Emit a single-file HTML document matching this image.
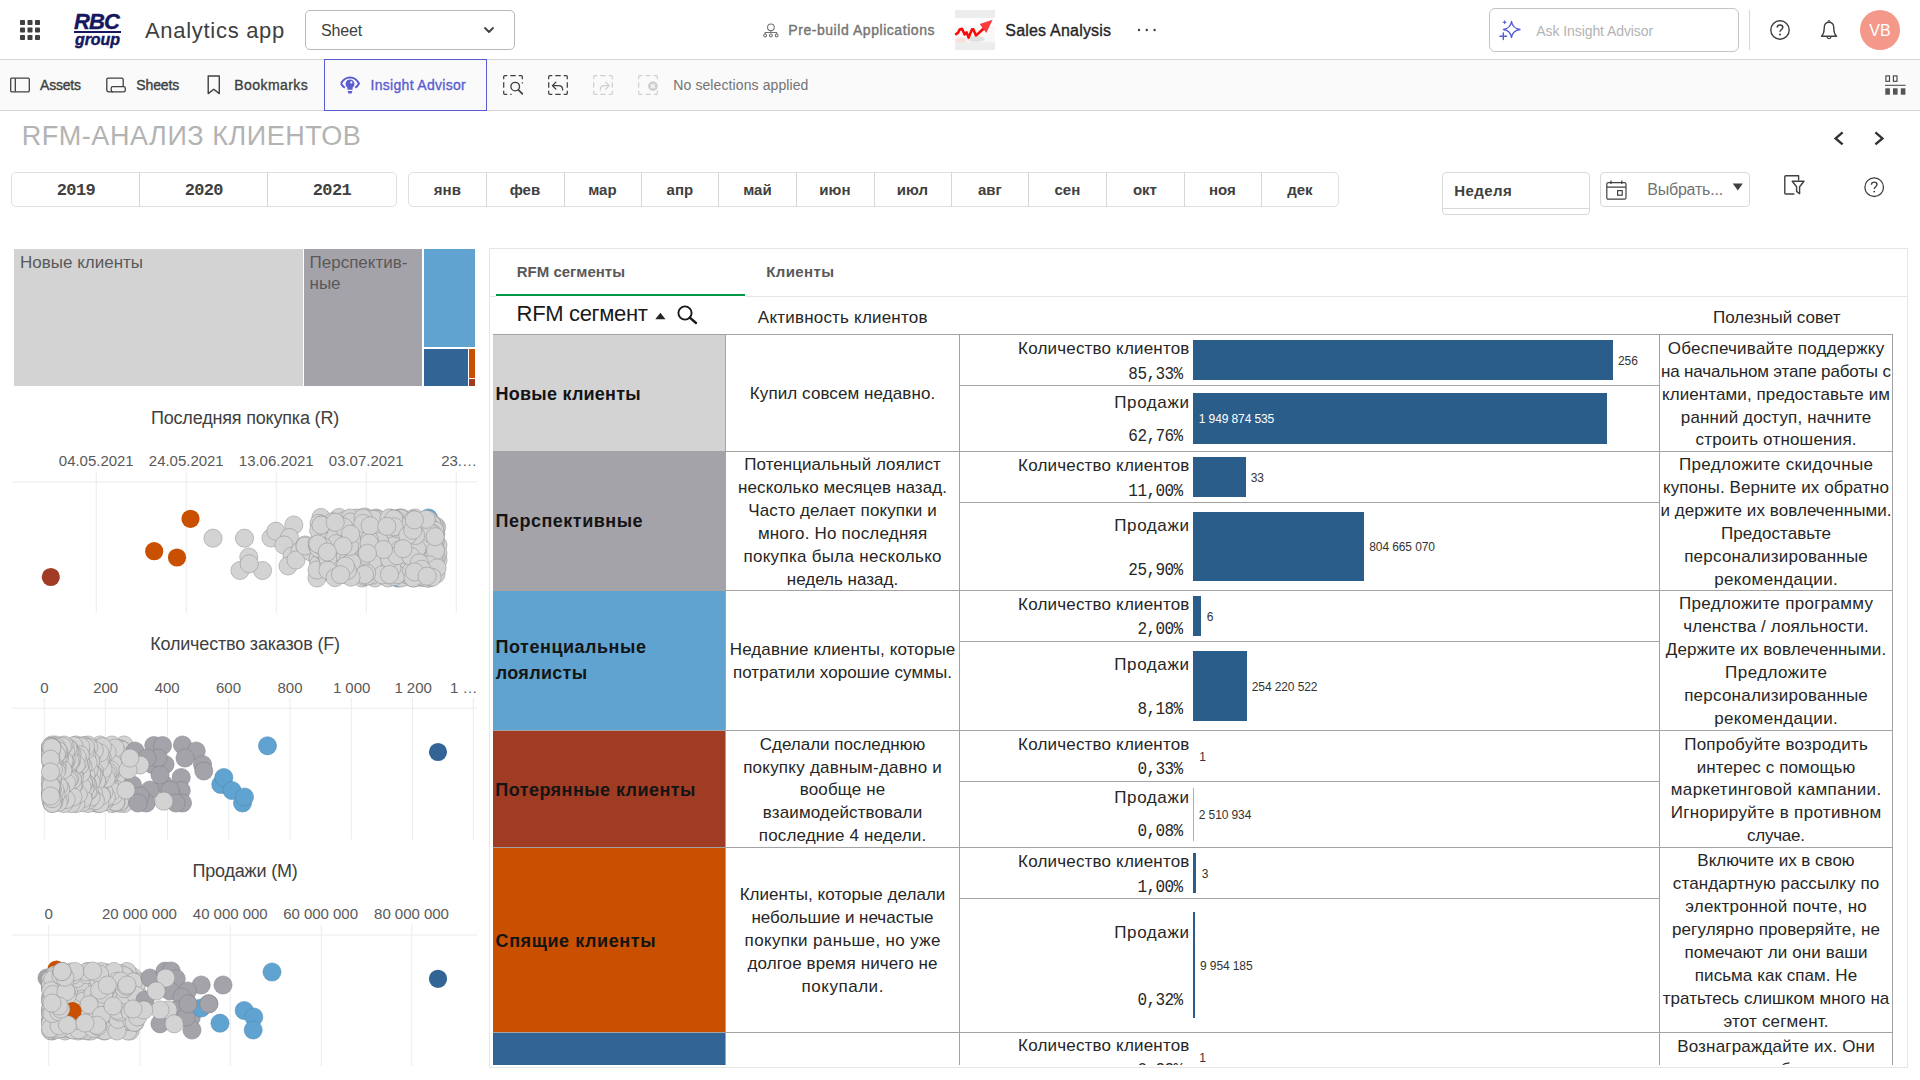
<!DOCTYPE html>
<html lang="ru"><head><meta charset="utf-8"><title>RFM-анализ клиентов - Sales Analysis</title>
<style>
html,body{margin:0;padding:0;background:#fff;}
body{width:1920px;height:1080px;position:relative;overflow:hidden;font-family:"Liberation Sans",sans-serif;}
.b{position:absolute;box-sizing:border-box;}
.t{position:absolute;white-space:nowrap;}
svg{display:block;overflow:visible;}
</style></head><body>

<header>
<div class="b" style="left:0px;top:0px;width:1920px;height:60px;background:#fff;border-bottom:1px solid #d6d6d6;"></div>
<svg class="b" style="left:20px;top:20px;" width="20" height="20" viewBox="0 0 20 20"><g fill="#404040"><rect x="0" y="0" width="5" height="5" rx="0.8"/><rect x="7.5" y="0" width="5" height="5" rx="0.8"/><rect x="15" y="0" width="5" height="5" rx="0.8"/><rect x="0" y="7.5" width="5" height="5" rx="0.8"/><rect x="7.5" y="7.5" width="5" height="5" rx="0.8"/><rect x="15" y="7.5" width="5" height="5" rx="0.8"/><rect x="0" y="15" width="5" height="5" rx="0.8"/><rect x="7.5" y="15" width="5" height="5" rx="0.8"/><rect x="15" y="15" width="5" height="5" rx="0.8"/></g></svg>
<span class="t" style="top:11px;font:700 22px/22px 'Liberation Sans',sans-serif;color:#17175f;letter-spacing:-0.9px;left:74.00px;font-style:italic;-webkit-text-stroke:0.4px #17175f;">RBC</span>
<div class="b" style="left:74px;top:31px;width:47px;height:1.7px;background:#17175f;"></div>
<span class="t" style="top:32px;font:700 16px/16px 'Liberation Sans',sans-serif;color:#17175f;letter-spacing:-0.1px;left:75.00px;font-style:italic;-webkit-text-stroke:0.45px #17175f;">group</span>
<span class="t" style="top:20px;font:400 22px/22px 'Liberation Sans',sans-serif;color:#404040;letter-spacing:0.7px;left:145.00px;">Analytics app</span>
<div class="b" style="left:305px;top:10px;width:210px;height:40px;border:1px solid #b8b8b8;border-radius:5px;background:#fff;"></div>
<span class="t" style="top:23px;font:400 16px/16px 'Liberation Sans',sans-serif;color:#404040;letter-spacing:-0.15px;left:321.00px;">Sheet</span>
<svg class="b" style="left:484px;top:27px;" width="10" height="7" viewBox="0 0 10 7"><path d="M1 1 L5 5 L9 1" fill="none" stroke="#404040" stroke-width="1.8" stroke-linecap="round" stroke-linejoin="round"/></svg>
<svg class="b" style="left:762.6px;top:23.3px;" width="15.8" height="14.9" viewBox="0 0 17 16"><g fill="none" stroke="#737373" stroke-width="1.15"><circle cx="8.5" cy="4.6" r="3.6"/><path d="M8.5 8.2V11 M2.3 11.8V10.2H14.7V11.8"/><circle cx="2.3" cy="13.4" r="1.5"/><circle cx="8.5" cy="13.4" r="1.5"/><circle cx="14.7" cy="13.4" r="1.5"/></g></svg>
<span class="t" style="top:23px;font:400 14px/14px 'Liberation Sans',sans-serif;color:#737373;letter-spacing:0.55px;left:788.30px;-webkit-text-stroke:0.35px currentColor;">Pre-build Applications</span>
<div class="b" style="left:955px;top:10px;width:40px;height:40px;background:#ededed;"></div>
<svg class="b" style="left:955px;top:10px;" width="40" height="40" viewBox="0 0 40 40"><rect x="0" y="8" width="40" height="8.2" fill="#fff"/><rect x="0" y="16.2" width="40" height="15.8" fill="#f8f8f8"/><ellipse cx="21" cy="29" rx="9" ry="3" fill="#d9d9d9" opacity="0.75"/><ellipse cx="6" cy="30" rx="6" ry="2.5" fill="#fbd9d2" opacity="0.8"/><path d="M0.2 24.8L3.2 22.6L4.6 19.4L7 18.8L9.6 24.4L11.6 22.4L13.6 27.6L17 19.4L18.4 19.4L21 25.4L26 21L32 15.5" fill="none" stroke="#fb0a0a" stroke-width="2.6" stroke-linejoin="round"/><path d="M24.7 14L37.6 9.8L31.3 23Z" fill="#f93d3d"/></svg>
<span class="t" style="top:23px;font:400 16px/16px 'Liberation Sans',sans-serif;color:#262626;letter-spacing:0.2px;left:1005.30px;-webkit-text-stroke:0.35px currentColor;">Sales Analysis</span>
<svg class="b" style="left:1137px;top:28px;" width="20" height="4" viewBox="0 0 20 4"><g fill="#404040"><circle cx="2" cy="2" r="1.2"/><circle cx="9.8" cy="2" r="1.2"/><circle cx="17.6" cy="2" r="1.2"/></g></svg>
<div class="b" style="left:1489px;top:8px;width:250px;height:44px;border:1px solid #c4c4c4;border-radius:6px;background:#fff;"></div>
<svg class="b" style="left:1500px;top:20px;" width="21" height="20" viewBox="0 0 21 20"><g fill="none" stroke="#5a5dd1" stroke-width="1.4" stroke-linejoin="round"><path d="M11.5 1.5 C12.3 6.5 14.5 8.7 20 9.5 C14.5 10.3 12.3 12.5 11.5 17.5 C10.7 12.5 8.5 10.3 3.5 9.5 C8.5 8.7 10.7 6.5 11.5 1.5Z"/><path d="M3.3 13V19.5M0 16.2H6.6" stroke-linecap="round"/></g><path d="M4.6 0 L5.3 1.6 L6.9 2.3 L5.3 3 L4.6 4.6 L3.9 3 L2.3 2.3 L3.9 1.6Z" fill="#5a5dd1"/></svg>
<span class="t" style="top:24px;font:400 14px/14px 'Liberation Sans',sans-serif;color:#b3b3b3;letter-spacing:-0.08px;left:1536.30px;">Ask Insight Advisor</span>
<div class="b" style="left:1749px;top:10px;width:1px;height:40px;background:#d6d6d6;"></div>
<svg class="b" style="left:1770px;top:20px;" width="20" height="20" viewBox="0 0 20 20"><circle cx="10" cy="10" r="9.2" fill="none" stroke="#404040" stroke-width="1.4"/><path d="M7.2 7.6 C7.2 5.8 8.5 4.9 10 4.9 C11.6 4.9 12.8 5.9 12.8 7.4 C12.8 9.4 10 9.6 10 11.8" fill="none" stroke="#404040" stroke-width="1.5"/><circle cx="10" cy="14.4" r="1" fill="#404040"/></svg>
<svg class="b" style="left:1820px;top:20px;" width="18" height="20" viewBox="0 0 18 20"><path d="M9 2.2 C5.6 2.2 4.2 5 4.2 8 C4.2 12 3.3 14.4 1.5 16.3 H16.5 C14.7 14.4 13.8 12 13.8 8 C13.8 5 12.4 2.2 9 2.2Z" fill="none" stroke="#404040" stroke-width="1.4" stroke-linejoin="round"/><circle cx="9" cy="1.6" r="1.1" fill="none" stroke="#404040" stroke-width="1"/><path d="M7 16.8 C7.2 19.2 10.8 19.2 11 16.8" fill="none" stroke="#404040" stroke-width="1.3"/></svg>
<div class="b" style="left:1860px;top:10px;width:40px;height:40px;background:#f4998a;border-radius:50%;"></div>
<span class="t" style="top:23px;font:400 16px/16px 'Liberation Sans',sans-serif;color:#fff;letter-spacing:0.2px;left:1880.00px;transform:translateX(-50%);">VB</span>
</header>
<nav>
<div class="b" style="left:0px;top:60px;width:1920px;height:51px;background:#fafafa;border-bottom:1px solid #d6d6d6;"></div>
<svg class="b" style="left:10px;top:77px;" width="20" height="16" viewBox="0 0 20 16"><rect x="0.7" y="1.2" width="18.6" height="13.6" rx="1" fill="none" stroke="#404040" stroke-width="1.3"/><path d="M5.3 1.2V14.8" stroke="#404040" stroke-width="1.3"/></svg>
<span class="t" style="top:78px;font:400 14px/14px 'Liberation Sans',sans-serif;color:#404040;letter-spacing:-0.2px;left:40.00px;-webkit-text-stroke:0.35px currentColor;">Assets</span>
<svg class="b" style="left:106px;top:77px;" width="20" height="16" viewBox="0 0 20 16"><path d="M17.2 9.4V2.6Q17.2 1.2 15.8 1.2H2.2Q0.8 1.2 0.8 2.6V12.8Q0.8 14.8 2.8 14.8H7" fill="none" stroke="#404040" stroke-width="1.3"/><rect x="5.2" y="9.6" width="14.1" height="5.2" rx="1.6" fill="none" stroke="#404040" stroke-width="1.3"/></svg>
<span class="t" style="top:78px;font:400 14px/14px 'Liberation Sans',sans-serif;color:#404040;letter-spacing:-0.12px;left:136.30px;-webkit-text-stroke:0.35px currentColor;">Sheets</span>
<svg class="b" style="left:207px;top:75px;" width="14" height="20" viewBox="0 0 14 20"><path d="M1.2 1 H12.3 V18.6 L6.75 14.2 L1.2 18.6Z" fill="none" stroke="#404040" stroke-width="1.4" stroke-linejoin="round"/></svg>
<span class="t" style="top:78px;font:400 14px/14px 'Liberation Sans',sans-serif;color:#404040;letter-spacing:0.45px;left:234.20px;-webkit-text-stroke:0.35px currentColor;">Bookmarks</span>
<div class="b" style="left:324px;top:59px;width:163px;height:52px;border:1px solid #595dd0;background:#fafafa;"></div>
<svg class="b" style="left:340px;top:76px;" width="20" height="18" viewBox="0 0 20 18"><path d="M1 7.4C3.4 3 6.5 1.4 10 1.4C13.5 1.4 16.6 3 19 7.4C17.9 9.4 16.6 10.8 15.2 11.8" fill="none" stroke="#5a5dd1" stroke-width="2"/><path d="M1 7.4C2.1 9.4 3.4 10.8 4.8 11.8" fill="none" stroke="#5a5dd1" stroke-width="2"/><path d="M10 3.4A4.5 4.5 0 0 0 7.4 11.5L7.4 13.7H12.6L12.6 11.5A4.5 4.5 0 0 0 10 3.4Z" fill="#5a5dd1"/><circle cx="11.3" cy="6.4" r="1.15" fill="#fafafa"/><path d="M7.6 15H12.4L11.6 17.5H8.4Z" fill="#5a5dd1"/></svg>
<span class="t" style="top:78px;font:400 14px/14px 'Liberation Sans',sans-serif;color:#5a5dd1;letter-spacing:0.3px;left:370.50px;-webkit-text-stroke:0.35px currentColor;">Insight Advisor</span>
<svg class="b" style="left:503px;top:75px;" width="20" height="20" viewBox="0 0 20 20"><path d="M0.7 4.3V1.7Q0.7 0.7 1.7 0.7H4.3M7.3 0.7H12.7M15.7 0.7H18.3Q19.3 0.7 19.3 1.7V4.3M4.3 19.3H1.7Q0.7 19.3 0.7 18.3V15.7M0.7 12.7V7.3" fill="none" stroke="#404040" stroke-width="1.25"/><path d="M19.3 7.3V8.6M8.6 19.3H7.3" fill="none" stroke="#404040" stroke-width="1.25"/><circle cx="12.2" cy="11.6" r="4.3" fill="none" stroke="#404040" stroke-width="1.35"/><path d="M15.4 14.9L19.4 18.9" stroke="#404040" stroke-width="1.7" stroke-linecap="round"/></svg>
<svg class="b" style="left:548px;top:75px;" width="20" height="20" viewBox="0 0 20 20"><path d="M0.7 4.3V1.7Q0.7 0.7 1.7 0.7H4.3M7.3 0.7H12.7M15.7 0.7H18.3Q19.3 0.7 19.3 1.7V4.3M19.3 7.3V12.7M19.3 15.7V18.3Q19.3 19.3 18.3 19.3H15.7M12.7 19.3H7.3M4.3 19.3H1.7Q0.7 19.3 0.7 18.3V15.7M0.7 12.7V7.3" fill="none" stroke="#404040" stroke-width="1.25"/><path d="M4.6 10.6H10.4C13 10.6 14.6 12.2 14.6 14.2V15.6" fill="none" stroke="#404040" stroke-width="1.3"/><path d="M7.8 7.2L4.4 10.6L7.8 14" fill="none" stroke="#404040" stroke-width="1.3" stroke-linejoin="round" stroke-linecap="round"/></svg>
<svg class="b" style="left:593px;top:75px;" width="20" height="20" viewBox="0 0 20 20"><path d="M0.7 4.3V1.7Q0.7 0.7 1.7 0.7H4.3M7.3 0.7H12.7M15.7 0.7H18.3Q19.3 0.7 19.3 1.7V4.3M19.3 7.3V12.7M19.3 15.7V18.3Q19.3 19.3 18.3 19.3H15.7M12.7 19.3H7.3M4.3 19.3H1.7Q0.7 19.3 0.7 18.3V15.7M0.7 12.7V7.3" fill="none" stroke="#d0d0d0" stroke-width="1.25"/><path d="M15.4 10.6H11.6C9 10.6 7.4 12.2 7.4 14.2V15.6" fill="none" stroke="#d0d0d0" stroke-width="1.3"/><path d="M12.8 7.2L16.2 10.6L12.8 14" fill="none" stroke="#d0d0d0" stroke-width="1.3" stroke-linejoin="round" stroke-linecap="round"/></svg>
<svg class="b" style="left:638px;top:75px;" width="20" height="20" viewBox="0 0 20 20"><path d="M0.7 4.3V1.7Q0.7 0.7 1.7 0.7H4.3M7.3 0.7H12.7M15.7 0.7H18.3Q19.3 0.7 19.3 1.7V4.3M19.3 15.7V18.3Q19.3 19.3 18.3 19.3H15.7M12.7 19.3H7.3M4.3 19.3H1.7Q0.7 19.3 0.7 18.3V15.7M0.7 12.7V7.3" fill="none" stroke="#d0d0d0" stroke-width="1.25"/><circle cx="14.9" cy="11.1" r="6" fill="#fafafa"/><circle cx="14.9" cy="11.1" r="4.9" fill="#d0d0d0"/><path d="M13 9.2L16.8 13M16.8 9.2L13 13" stroke="#fafafa" stroke-width="1.3"/></svg>
<span class="t" style="top:78px;font:400 14px/14px 'Liberation Sans',sans-serif;color:#737373;letter-spacing:0.1px;left:673.30px;">No selections applied</span>
<svg class="b" style="left:1885px;top:75px;" width="21" height="20" viewBox="0 0 21 20"><g fill="none" stroke="#404040" stroke-width="1.1"><rect x="0.9" y="0.9" width="3.6" height="5.4"/><rect x="8.4" y="0.9" width="3.6" height="5.4"/></g><path d="M0 10.3 H20.6" stroke="#404040" stroke-width="1"/><g fill="#555"><rect x="0.3" y="13.3" width="4.6" height="6.4"/><rect x="8" y="13.3" width="4.6" height="6.4"/><rect x="15.8" y="13.3" width="4.6" height="6.4"/></g></svg>
</nav>
<section>
<span class="t" style="top:123px;font:400 27px/27px 'Liberation Sans',sans-serif;color:#b3b3b3;letter-spacing:0.55px;left:21.70px;">RFM-АНАЛИЗ КЛИЕНТОВ</span>
<svg class="b" style="left:1833px;top:131px;" width="12" height="15" viewBox="0 0 12 15"><path d="M9.6 1.4 L2.6 7.4 L9.6 13.4" fill="none" stroke="#333" stroke-width="2.4" stroke-linejoin="miter"/></svg>
<svg class="b" style="left:1873px;top:131px;" width="12" height="15" viewBox="0 0 12 15"><path d="M2.4 1.4 L9.4 7.4 L2.4 13.4" fill="none" stroke="#333" stroke-width="2.4" stroke-linejoin="miter"/></svg>
<div class="b" style="left:11px;top:172px;width:386px;height:35px;border:1px solid #e0e0e0;border-radius:5px;background:#fff;"></div>
<div class="b" style="left:139px;top:172px;width:1px;height:35px;background:#d6d6d6;"></div>
<div class="b" style="left:267px;top:172px;width:1px;height:35px;background:#d6d6d6;"></div>
<span class="t" style="top:182px;font:700 17px/17px 'Liberation Mono',monospace;color:#404040;letter-spacing:-0.65px;left:75.90px;transform:translateX(-50%);">2019</span>
<span class="t" style="top:182px;font:700 17px/17px 'Liberation Mono',monospace;color:#404040;letter-spacing:-0.65px;left:203.80px;transform:translateX(-50%);">2020</span>
<span class="t" style="top:182px;font:700 17px/17px 'Liberation Mono',monospace;color:#404040;letter-spacing:-0.65px;left:331.90px;transform:translateX(-50%);">2021</span>
<div class="b" style="left:408px;top:172px;width:931px;height:35px;border:1px solid #e0e0e0;border-radius:5px;background:#fff;"></div>
<span class="t" style="top:182px;font:700 15px/15px 'Liberation Sans',sans-serif;color:#404040;left:447.40px;transform:translateX(-50%);">янв</span>
<div class="b" style="left:486px;top:172px;width:1px;height:35px;background:#d6d6d6;"></div>
<span class="t" style="top:182px;font:700 15px/15px 'Liberation Sans',sans-serif;color:#404040;left:524.90px;transform:translateX(-50%);">фев</span>
<div class="b" style="left:564px;top:172px;width:1px;height:35px;background:#d6d6d6;"></div>
<span class="t" style="top:182px;font:700 15px/15px 'Liberation Sans',sans-serif;color:#404040;left:602.40px;transform:translateX(-50%);">мар</span>
<div class="b" style="left:641px;top:172px;width:1px;height:35px;background:#d6d6d6;"></div>
<span class="t" style="top:182px;font:700 15px/15px 'Liberation Sans',sans-serif;color:#404040;left:679.90px;transform:translateX(-50%);">апр</span>
<div class="b" style="left:718px;top:172px;width:1px;height:35px;background:#d6d6d6;"></div>
<span class="t" style="top:182px;font:700 15px/15px 'Liberation Sans',sans-serif;color:#404040;left:757.40px;transform:translateX(-50%);">май</span>
<div class="b" style="left:796px;top:172px;width:1px;height:35px;background:#d6d6d6;"></div>
<span class="t" style="top:182px;font:700 15px/15px 'Liberation Sans',sans-serif;color:#404040;left:834.90px;transform:translateX(-50%);">июн</span>
<div class="b" style="left:874px;top:172px;width:1px;height:35px;background:#d6d6d6;"></div>
<span class="t" style="top:182px;font:700 15px/15px 'Liberation Sans',sans-serif;color:#404040;left:912.40px;transform:translateX(-50%);">июл</span>
<div class="b" style="left:951px;top:172px;width:1px;height:35px;background:#d6d6d6;"></div>
<span class="t" style="top:182px;font:700 15px/15px 'Liberation Sans',sans-serif;color:#404040;left:989.90px;transform:translateX(-50%);">авг</span>
<div class="b" style="left:1028px;top:172px;width:1px;height:35px;background:#d6d6d6;"></div>
<span class="t" style="top:182px;font:700 15px/15px 'Liberation Sans',sans-serif;color:#404040;left:1067.40px;transform:translateX(-50%);">сен</span>
<div class="b" style="left:1106px;top:172px;width:1px;height:35px;background:#d6d6d6;"></div>
<span class="t" style="top:182px;font:700 15px/15px 'Liberation Sans',sans-serif;color:#404040;left:1144.90px;transform:translateX(-50%);">окт</span>
<div class="b" style="left:1184px;top:172px;width:1px;height:35px;background:#d6d6d6;"></div>
<span class="t" style="top:182px;font:700 15px/15px 'Liberation Sans',sans-serif;color:#404040;left:1222.40px;transform:translateX(-50%);">ноя</span>
<div class="b" style="left:1261px;top:172px;width:1px;height:35px;background:#d6d6d6;"></div>
<span class="t" style="top:182px;font:700 15px/15px 'Liberation Sans',sans-serif;color:#404040;left:1299.90px;transform:translateX(-50%);">дек</span>
<div class="b" style="left:1442px;top:172px;width:148px;height:43px;border:1px solid #d9d9d9;border-radius:4px;background:#fff;"></div>
<div class="b" style="left:1442px;top:208px;width:148px;height:1px;background:#d9d9d9;"></div>
<span class="t" style="top:183px;font:700 15px/15px 'Liberation Sans',sans-serif;color:#404040;letter-spacing:0.45px;left:1454.20px;">Неделя</span>
<div class="b" style="left:1600px;top:172px;width:150px;height:35px;border:1px solid #d9d9d9;border-radius:4px;background:#fff;"></div>
<svg class="b" style="left:1606px;top:180px;" width="21" height="20" viewBox="0 0 21 20"><g fill="none" stroke="#404040" stroke-width="1.2"><rect x="0.8" y="2.6" width="19.2" height="16.6" rx="1.5"/><path d="M0.8 7.2H20 M5 0.4V4 M15.8 0.4V4"/><rect x="11.6" y="10.6" width="4.6" height="4.6"/></g></svg>
<span class="t" style="top:182px;font:400 16px/16px 'Liberation Sans',sans-serif;color:#737373;letter-spacing:-0.2px;left:1647.20px;">Выбрать...</span>
<svg class="b" style="left:1732px;top:183px;" width="12" height="8" viewBox="0 0 12 8"><path d="M0.8 0.6 H10.8 L5.8 7.6Z" fill="#404040"/></svg>
<svg class="b" style="left:1784px;top:175px;" width="21" height="21" viewBox="0 0 21 21"><g fill="none" stroke="#404040" stroke-width="1.4" stroke-linejoin="round"><path d="M10.4 19 H1.8 Q0.8 19 0.8 18 V1.8 Q0.8 0.8 1.8 0.8 H14.6 V5.6"/><path d="M8.2 6.2 H20 L15.6 11.8 V18.8 L12.6 16.4 V11.8Z" fill="#fff"/></g></svg>
<svg class="b" style="left:1864px;top:177px;" width="21" height="21" viewBox="0 0 21 21"><circle cx="10.2" cy="10.2" r="9.3" fill="none" stroke="#404040" stroke-width="1.3"/><path d="M7.4 7.8 C7.4 6 8.7 5.1 10.2 5.1 C11.8 5.1 13 6.1 13 7.6 C13 9.6 10.2 9.8 10.2 12" fill="none" stroke="#404040" stroke-width="1.4"/><circle cx="10.2" cy="14.6" r="0.95" fill="#404040"/></svg>
</section>
<aside>
<div class="b" style="left:14.25px;top:249.25px;width:288.75px;height:136.25px;background:#d3d3d3;"></div>
<div class="b" style="left:304.25px;top:249.25px;width:117.75px;height:136.25px;background:#a5a3aa;"></div>
<div class="b" style="left:423.5px;top:249.25px;width:51px;height:97.75px;background:#60a3d0;"></div>
<div class="b" style="left:423.5px;top:348.5px;width:44.5px;height:37px;background:#326496;"></div>
<div class="b" style="left:469.25px;top:348.5px;width:5.25px;height:29px;background:#c85000;"></div>
<div class="b" style="left:469.25px;top:379.25px;width:5.25px;height:6.25px;background:#a03c23;"></div>
<span class="t" style="top:254px;font:400 17px/17px 'Liberation Sans',sans-serif;color:#595959;left:20.00px;">Новые клиенты</span>
<span class="t" style="top:254px;font:400 17px/17px 'Liberation Sans',sans-serif;color:#595959;left:309.50px;">Перспектив-</span>
<span class="t" style="top:275px;font:400 17px/17px 'Liberation Sans',sans-serif;color:#595959;left:309.50px;">ные</span>
<span class="t" style="top:409px;font:400 18px/18px 'Liberation Sans',sans-serif;color:#404040;letter-spacing:-0.18px;left:245.00px;transform:translateX(-50%);">Последняя покупка (R)</span>
<span class="t" style="top:453px;font:400 15px/15px 'Liberation Sans',sans-serif;color:#595959;letter-spacing:-0.03px;left:96.25px;transform:translateX(-50%);">04.05.2021</span>
<span class="t" style="top:453px;font:400 15px/15px 'Liberation Sans',sans-serif;color:#595959;letter-spacing:-0.03px;left:186.25px;transform:translateX(-50%);">24.05.2021</span>
<span class="t" style="top:453px;font:400 15px/15px 'Liberation Sans',sans-serif;color:#595959;letter-spacing:-0.03px;left:276.25px;transform:translateX(-50%);">13.06.2021</span>
<span class="t" style="top:453px;font:400 15px/15px 'Liberation Sans',sans-serif;color:#595959;letter-spacing:-0.03px;left:366.25px;transform:translateX(-50%);">03.07.2021</span>
<span class="t" style="top:453px;font:400 15px/15px 'Liberation Sans',sans-serif;color:#595959;letter-spacing:-0.03px;left:441.25px;">23.…</span>
<svg class="b" style="left:0;top:0" width="490" height="1080" viewBox="0 0 490 1080"><path d="M96.25 472V613" stroke="#ebebeb" stroke-width="1"/><path d="M186.25 472V613" stroke="#ebebeb" stroke-width="1"/><path d="M276.25 472V613" stroke="#ebebeb" stroke-width="1"/><path d="M366.25 472V613" stroke="#ebebeb" stroke-width="1"/><path d="M456.25 472V613" stroke="#ebebeb" stroke-width="1"/><path d="M12 482H477" stroke="#ebebeb" stroke-width="1.2"/><g fill="#a03c23" stroke="none" stroke-width="0.5"><circle cx="50.8" cy="577.0" r="9.1"/></g><g fill="#c85000" stroke="none" stroke-width="0.5"><circle cx="190.5" cy="518.8" r="9.1"/><circle cx="154.2" cy="551.2" r="9.1"/><circle cx="177.0" cy="557.5" r="9.1"/></g><g fill="#60a3d0" stroke="#4a86b0" stroke-width="0.5"><circle cx="428.5" cy="518.0" r="9.1"/><circle cx="398.0" cy="578.0" r="9.1"/></g><g fill="#a5a3aa" stroke="#8c8c8c" stroke-width="0.5"><circle cx="428.0" cy="578.0" r="9.1"/></g><g fill="#d3d3d3" stroke="#8c8c8c" stroke-width="0.5"><circle cx="213.0" cy="538.2" r="9.1"/><circle cx="244.5" cy="538.2" r="9.1"/><circle cx="248.8" cy="557.0" r="9.1"/><circle cx="240.0" cy="570.5" r="9.1"/><circle cx="262.5" cy="570.5" r="9.1"/><circle cx="249.2" cy="563.8" r="9.1"/><circle cx="271.0" cy="538.0" r="9.1"/><circle cx="275.8" cy="531.2" r="9.1"/><circle cx="293.8" cy="525.0" r="9.1"/><circle cx="289.5" cy="537.5" r="9.1"/><circle cx="284.0" cy="545.0" r="9.1"/><circle cx="292.0" cy="556.0" r="9.1"/><circle cx="300.0" cy="551.0" r="9.1"/><circle cx="288.0" cy="566.0" r="9.1"/><circle cx="296.0" cy="560.0" r="9.1"/><circle cx="305.0" cy="545.0" r="9.1"/><circle cx="311.0" cy="552.0" r="9.1"/><circle cx="431.2" cy="525.6" r="9.1"/><circle cx="413.8" cy="576.5" r="9.1"/><circle cx="380.0" cy="538.3" r="9.1"/><circle cx="376.0" cy="518.0" r="9.1"/><circle cx="433.7" cy="568.9" r="9.1"/><circle cx="394.0" cy="532.3" r="9.1"/><circle cx="334.9" cy="540.3" r="9.1"/><circle cx="414.7" cy="542.8" r="9.1"/><circle cx="429.2" cy="566.4" r="9.1"/><circle cx="392.5" cy="529.4" r="9.1"/><circle cx="434.0" cy="570.0" r="9.1"/><circle cx="354.7" cy="533.9" r="9.1"/><circle cx="425.2" cy="531.0" r="9.1"/><circle cx="369.5" cy="575.7" r="9.1"/><circle cx="424.3" cy="566.4" r="9.1"/><circle cx="354.4" cy="539.8" r="9.1"/><circle cx="358.9" cy="573.2" r="9.1"/><circle cx="438.0" cy="545.0" r="9.1"/><circle cx="409.0" cy="576.9" r="9.1"/><circle cx="347.1" cy="575.1" r="9.1"/><circle cx="353.0" cy="524.1" r="9.1"/><circle cx="320.5" cy="531.4" r="9.1"/><circle cx="351.9" cy="533.9" r="9.1"/><circle cx="387.2" cy="538.3" r="9.1"/><circle cx="428.8" cy="535.4" r="9.1"/><circle cx="373.3" cy="532.0" r="9.1"/><circle cx="421.2" cy="533.5" r="9.1"/><circle cx="375.7" cy="531.4" r="9.1"/><circle cx="350.6" cy="541.6" r="9.1"/><circle cx="368.5" cy="538.8" r="9.1"/><circle cx="376.9" cy="533.9" r="9.1"/><circle cx="378.9" cy="525.4" r="9.1"/><circle cx="420.5" cy="577.1" r="9.1"/><circle cx="355.4" cy="522.2" r="9.1"/><circle cx="382.6" cy="538.9" r="9.1"/><circle cx="396.5" cy="544.4" r="9.1"/><circle cx="348.2" cy="521.8" r="9.1"/><circle cx="404.2" cy="559.9" r="9.1"/><circle cx="392.6" cy="559.6" r="9.1"/><circle cx="320.6" cy="532.9" r="9.1"/><circle cx="436.6" cy="527.0" r="9.1"/><circle cx="410.0" cy="570.6" r="9.1"/><circle cx="358.2" cy="549.4" r="9.1"/><circle cx="397.2" cy="563.6" r="9.1"/><circle cx="375.3" cy="549.1" r="9.1"/><circle cx="335.9" cy="521.2" r="9.1"/><circle cx="403.2" cy="558.8" r="9.1"/><circle cx="341.5" cy="565.9" r="9.1"/><circle cx="330.3" cy="557.8" r="9.1"/><circle cx="383.0" cy="560.0" r="9.1"/><circle cx="394.0" cy="574.0" r="9.1"/><circle cx="435.4" cy="541.8" r="9.1"/><circle cx="388.4" cy="525.1" r="9.1"/><circle cx="360.7" cy="518.2" r="9.1"/><circle cx="339.0" cy="517.5" r="9.1"/><circle cx="356.9" cy="533.1" r="9.1"/><circle cx="351.2" cy="569.8" r="9.1"/><circle cx="424.0" cy="577.6" r="9.1"/><circle cx="388.9" cy="538.6" r="9.1"/><circle cx="370.0" cy="560.0" r="9.1"/><circle cx="401.0" cy="578.0" r="9.1"/><circle cx="379.7" cy="573.2" r="9.1"/><circle cx="379.8" cy="537.9" r="9.1"/><circle cx="349.7" cy="530.1" r="9.1"/><circle cx="366.5" cy="571.9" r="9.1"/><circle cx="353.3" cy="521.5" r="9.1"/><circle cx="357.4" cy="539.6" r="9.1"/><circle cx="345.1" cy="540.9" r="9.1"/><circle cx="416.3" cy="520.4" r="9.1"/><circle cx="347.6" cy="534.8" r="9.1"/><circle cx="345.3" cy="547.5" r="9.1"/><circle cx="345.5" cy="533.9" r="9.1"/><circle cx="376.8" cy="523.5" r="9.1"/><circle cx="305.0" cy="546.0" r="9.1"/><circle cx="324.8" cy="542.9" r="9.1"/><circle cx="433.9" cy="525.4" r="9.1"/><circle cx="391.0" cy="568.1" r="9.1"/><circle cx="391.8" cy="555.8" r="9.1"/><circle cx="431.2" cy="560.8" r="9.1"/><circle cx="358.0" cy="549.4" r="9.1"/><circle cx="422.1" cy="527.7" r="9.1"/><circle cx="399.6" cy="518.0" r="9.1"/><circle cx="367.2" cy="533.5" r="9.1"/><circle cx="351.8" cy="558.2" r="9.1"/><circle cx="427.2" cy="546.5" r="9.1"/><circle cx="408.5" cy="529.9" r="9.1"/><circle cx="342.2" cy="564.8" r="9.1"/><circle cx="318.7" cy="560.1" r="9.1"/><circle cx="374.0" cy="536.3" r="9.1"/><circle cx="377.3" cy="519.1" r="9.1"/><circle cx="369.4" cy="561.0" r="9.1"/><circle cx="386.9" cy="536.1" r="9.1"/><circle cx="358.6" cy="541.6" r="9.1"/><circle cx="319.3" cy="545.0" r="9.1"/><circle cx="360.0" cy="543.9" r="9.1"/><circle cx="318.1" cy="558.1" r="9.1"/><circle cx="377.9" cy="545.5" r="9.1"/><circle cx="421.1" cy="562.4" r="9.1"/><circle cx="339.2" cy="559.9" r="9.1"/><circle cx="412.3" cy="556.6" r="9.1"/><circle cx="391.3" cy="558.5" r="9.1"/><circle cx="384.1" cy="573.1" r="9.1"/><circle cx="337.4" cy="535.3" r="9.1"/><circle cx="322.1" cy="552.9" r="9.1"/><circle cx="365.6" cy="563.6" r="9.1"/><circle cx="434.2" cy="556.7" r="9.1"/><circle cx="381.6" cy="548.4" r="9.1"/><circle cx="334.6" cy="574.9" r="9.1"/><circle cx="366.4" cy="519.9" r="9.1"/><circle cx="368.1" cy="534.6" r="9.1"/><circle cx="374.4" cy="568.4" r="9.1"/><circle cx="421.3" cy="548.5" r="9.1"/><circle cx="327.0" cy="571.1" r="9.1"/><circle cx="376.6" cy="521.2" r="9.1"/><circle cx="432.6" cy="561.3" r="9.1"/><circle cx="328.9" cy="567.6" r="9.1"/><circle cx="415.0" cy="518.0" r="9.1"/><circle cx="345.0" cy="527.1" r="9.1"/><circle cx="434.0" cy="544.8" r="9.1"/><circle cx="406.4" cy="526.6" r="9.1"/><circle cx="409.0" cy="543.5" r="9.1"/><circle cx="379.7" cy="575.4" r="9.1"/><circle cx="435.0" cy="525.6" r="9.1"/><circle cx="385.9" cy="529.0" r="9.1"/><circle cx="407.1" cy="573.5" r="9.1"/><circle cx="365.0" cy="517.0" r="9.1"/><circle cx="360.6" cy="527.7" r="9.1"/><circle cx="375.0" cy="578.0" r="9.1"/><circle cx="357.2" cy="518.9" r="9.1"/><circle cx="419.1" cy="562.3" r="9.1"/><circle cx="408.5" cy="559.6" r="9.1"/><circle cx="358.6" cy="567.6" r="9.1"/><circle cx="398.1" cy="560.0" r="9.1"/><circle cx="350.1" cy="525.8" r="9.1"/><circle cx="345.2" cy="563.0" r="9.1"/><circle cx="397.8" cy="518.7" r="9.1"/><circle cx="404.0" cy="566.1" r="9.1"/><circle cx="369.9" cy="525.8" r="9.1"/><circle cx="431.6" cy="537.8" r="9.1"/><circle cx="406.3" cy="522.0" r="9.1"/><circle cx="382.0" cy="547.2" r="9.1"/><circle cx="381.5" cy="541.9" r="9.1"/><circle cx="398.0" cy="571.2" r="9.1"/><circle cx="433.6" cy="526.0" r="9.1"/><circle cx="326.1" cy="527.1" r="9.1"/><circle cx="371.6" cy="574.1" r="9.1"/><circle cx="332.4" cy="571.0" r="9.1"/><circle cx="377.6" cy="550.9" r="9.1"/><circle cx="402.0" cy="518.0" r="9.1"/><circle cx="435.3" cy="557.0" r="9.1"/><circle cx="348.9" cy="519.3" r="9.1"/><circle cx="346.7" cy="537.9" r="9.1"/><circle cx="438.0" cy="560.0" r="9.1"/><circle cx="384.3" cy="572.7" r="9.1"/><circle cx="417.9" cy="571.8" r="9.1"/><circle cx="378.5" cy="543.7" r="9.1"/><circle cx="412.4" cy="528.2" r="9.1"/><circle cx="348.7" cy="564.9" r="9.1"/><circle cx="387.1" cy="550.0" r="9.1"/><circle cx="385.3" cy="570.3" r="9.1"/><circle cx="365.4" cy="575.2" r="9.1"/><circle cx="428.3" cy="546.4" r="9.1"/><circle cx="341.5" cy="536.8" r="9.1"/><circle cx="362.3" cy="574.2" r="9.1"/><circle cx="333.2" cy="541.8" r="9.1"/><circle cx="366.8" cy="532.8" r="9.1"/><circle cx="365.8" cy="543.0" r="9.1"/><circle cx="406.9" cy="574.9" r="9.1"/><circle cx="364.4" cy="527.7" r="9.1"/><circle cx="391.2" cy="531.2" r="9.1"/><circle cx="336.5" cy="553.7" r="9.1"/><circle cx="396.8" cy="541.7" r="9.1"/><circle cx="371.2" cy="532.5" r="9.1"/><circle cx="391.8" cy="550.1" r="9.1"/><circle cx="396.7" cy="565.1" r="9.1"/><circle cx="414.8" cy="546.7" r="9.1"/><circle cx="344.3" cy="520.8" r="9.1"/><circle cx="343.7" cy="559.4" r="9.1"/><circle cx="387.5" cy="551.1" r="9.1"/><circle cx="427.5" cy="560.2" r="9.1"/><circle cx="357.2" cy="572.6" r="9.1"/><circle cx="368.8" cy="527.8" r="9.1"/><circle cx="386.8" cy="534.1" r="9.1"/><circle cx="354.8" cy="568.1" r="9.1"/><circle cx="413.2" cy="551.1" r="9.1"/><circle cx="331.4" cy="555.1" r="9.1"/><circle cx="362.0" cy="578.0" r="9.1"/><circle cx="364.6" cy="552.9" r="9.1"/><circle cx="352.8" cy="569.4" r="9.1"/><circle cx="363.2" cy="537.1" r="9.1"/><circle cx="428.1" cy="530.0" r="9.1"/><circle cx="414.8" cy="557.5" r="9.1"/><circle cx="429.3" cy="577.8" r="9.1"/><circle cx="427.0" cy="578.0" r="9.1"/><circle cx="356.0" cy="518.0" r="9.1"/><circle cx="428.0" cy="555.6" r="9.1"/><circle cx="425.3" cy="559.8" r="9.1"/><circle cx="399.3" cy="572.3" r="9.1"/><circle cx="341.0" cy="535.4" r="9.1"/><circle cx="358.1" cy="538.6" r="9.1"/><circle cx="321.0" cy="517.5" r="9.1"/><circle cx="404.8" cy="522.6" r="9.1"/><circle cx="421.2" cy="543.9" r="9.1"/><circle cx="381.4" cy="573.6" r="9.1"/><circle cx="423.2" cy="546.8" r="9.1"/><circle cx="321.3" cy="547.3" r="9.1"/><circle cx="371.0" cy="539.1" r="9.1"/><circle cx="391.1" cy="529.2" r="9.1"/><circle cx="435.8" cy="533.6" r="9.1"/><circle cx="372.4" cy="575.1" r="9.1"/><circle cx="432.5" cy="551.0" r="9.1"/><circle cx="378.1" cy="519.7" r="9.1"/><circle cx="340.0" cy="535.1" r="9.1"/><circle cx="364.8" cy="576.4" r="9.1"/><circle cx="361.0" cy="546.4" r="9.1"/><circle cx="413.1" cy="545.1" r="9.1"/><circle cx="437.9" cy="553.4" r="9.1"/><circle cx="436.0" cy="574.2" r="9.1"/><circle cx="356.3" cy="544.5" r="9.1"/><circle cx="403.7" cy="572.8" r="9.1"/><circle cx="393.8" cy="553.0" r="9.1"/><circle cx="359.7" cy="544.7" r="9.1"/><circle cx="358.7" cy="533.2" r="9.1"/><circle cx="428.5" cy="571.0" r="9.1"/><circle cx="414.0" cy="578.0" r="9.1"/><circle cx="325.6" cy="567.0" r="9.1"/><circle cx="405.2" cy="563.9" r="9.1"/><circle cx="355.1" cy="527.3" r="9.1"/><circle cx="318.7" cy="564.1" r="9.1"/><circle cx="424.0" cy="531.0" r="9.1"/><circle cx="421.8" cy="530.7" r="9.1"/><circle cx="414.1" cy="536.3" r="9.1"/><circle cx="413.2" cy="566.7" r="9.1"/><circle cx="351.7" cy="532.4" r="9.1"/><circle cx="390.9" cy="541.0" r="9.1"/><circle cx="331.7" cy="570.5" r="9.1"/><circle cx="373.8" cy="539.4" r="9.1"/><circle cx="338.4" cy="552.4" r="9.1"/><circle cx="356.8" cy="527.1" r="9.1"/><circle cx="383.2" cy="566.7" r="9.1"/><circle cx="399.3" cy="571.6" r="9.1"/><circle cx="371.6" cy="520.9" r="9.1"/><circle cx="388.0" cy="578.0" r="9.1"/><circle cx="413.5" cy="533.1" r="9.1"/><circle cx="370.2" cy="532.9" r="9.1"/><circle cx="361.6" cy="565.3" r="9.1"/><circle cx="391.5" cy="528.7" r="9.1"/><circle cx="352.9" cy="557.6" r="9.1"/><circle cx="321.9" cy="531.9" r="9.1"/><circle cx="418.3" cy="576.3" r="9.1"/><circle cx="317.0" cy="578.0" r="9.1"/><circle cx="372.3" cy="545.6" r="9.1"/><circle cx="376.9" cy="567.9" r="9.1"/><circle cx="381.2" cy="537.6" r="9.1"/><circle cx="317.0" cy="570.0" r="9.1"/><circle cx="421.3" cy="576.1" r="9.1"/><circle cx="389.1" cy="548.2" r="9.1"/><circle cx="355.2" cy="527.7" r="9.1"/><circle cx="406.8" cy="540.7" r="9.1"/><circle cx="328.7" cy="563.4" r="9.1"/><circle cx="392.0" cy="530.3" r="9.1"/><circle cx="393.0" cy="538.3" r="9.1"/><circle cx="423.1" cy="526.2" r="9.1"/><circle cx="370.6" cy="520.9" r="9.1"/><circle cx="402.0" cy="548.3" r="9.1"/><circle cx="426.0" cy="558.2" r="9.1"/><circle cx="394.5" cy="564.7" r="9.1"/><circle cx="339.9" cy="569.8" r="9.1"/><circle cx="394.1" cy="576.7" r="9.1"/><circle cx="435.4" cy="532.9" r="9.1"/><circle cx="358.2" cy="521.1" r="9.1"/><circle cx="378.2" cy="567.3" r="9.1"/><circle cx="333.2" cy="545.4" r="9.1"/><circle cx="416.3" cy="555.0" r="9.1"/><circle cx="407.5" cy="559.5" r="9.1"/><circle cx="332.3" cy="521.8" r="9.1"/><circle cx="368.2" cy="533.9" r="9.1"/><circle cx="317.6" cy="545.7" r="9.1"/><circle cx="412.2" cy="519.2" r="9.1"/><circle cx="433.8" cy="539.9" r="9.1"/><circle cx="364.3" cy="572.4" r="9.1"/><circle cx="367.7" cy="575.9" r="9.1"/><circle cx="393.6" cy="558.9" r="9.1"/><circle cx="319.0" cy="523.4" r="9.1"/><circle cx="427.2" cy="566.7" r="9.1"/><circle cx="415.0" cy="556.7" r="9.1"/><circle cx="400.9" cy="518.6" r="9.1"/><circle cx="375.9" cy="566.0" r="9.1"/><circle cx="323.8" cy="552.5" r="9.1"/><circle cx="388.3" cy="547.0" r="9.1"/><circle cx="351.7" cy="574.3" r="9.1"/><circle cx="368.3" cy="518.9" r="9.1"/><circle cx="325.8" cy="553.1" r="9.1"/><circle cx="436.2" cy="557.4" r="9.1"/><circle cx="396.4" cy="573.6" r="9.1"/><circle cx="350.0" cy="518.0" r="9.1"/><circle cx="318.6" cy="548.4" r="9.1"/><circle cx="381.1" cy="531.4" r="9.1"/><circle cx="350.8" cy="534.7" r="9.1"/><circle cx="369.1" cy="559.6" r="9.1"/><circle cx="428.4" cy="519.8" r="9.1"/><circle cx="384.1" cy="533.4" r="9.1"/><circle cx="327.8" cy="558.1" r="9.1"/><circle cx="405.7" cy="566.0" r="9.1"/><circle cx="406.0" cy="536.1" r="9.1"/><circle cx="403.0" cy="572.0" r="9.1"/><circle cx="344.4" cy="525.1" r="9.1"/><circle cx="354.6" cy="556.1" r="9.1"/><circle cx="421.3" cy="531.8" r="9.1"/><circle cx="434.3" cy="560.3" r="9.1"/><circle cx="329.7" cy="536.0" r="9.1"/><circle cx="431.9" cy="524.4" r="9.1"/><circle cx="419.8" cy="567.6" r="9.1"/><circle cx="348.0" cy="560.6" r="9.1"/><circle cx="428.0" cy="525.0" r="9.1"/><circle cx="332.0" cy="539.9" r="9.1"/><circle cx="333.5" cy="533.8" r="9.1"/><circle cx="336.1" cy="543.7" r="9.1"/><circle cx="390.5" cy="518.2" r="9.1"/><circle cx="323.5" cy="547.1" r="9.1"/><circle cx="368.4" cy="535.6" r="9.1"/><circle cx="390.2" cy="519.5" r="9.1"/><circle cx="346.6" cy="545.5" r="9.1"/><circle cx="405.0" cy="536.2" r="9.1"/><circle cx="400.0" cy="552.0" r="9.1"/><circle cx="352.9" cy="568.5" r="9.1"/><circle cx="434.7" cy="530.4" r="9.1"/><circle cx="376.5" cy="534.3" r="9.1"/><circle cx="363.3" cy="530.3" r="9.1"/><circle cx="372.7" cy="562.3" r="9.1"/><circle cx="397.0" cy="574.6" r="9.1"/><circle cx="395.5" cy="519.6" r="9.1"/><circle cx="366.1" cy="520.0" r="9.1"/><circle cx="391.7" cy="549.9" r="9.1"/><circle cx="365.5" cy="531.6" r="9.1"/><circle cx="421.4" cy="543.9" r="9.1"/><circle cx="349.1" cy="568.1" r="9.1"/><circle cx="363.0" cy="539.9" r="9.1"/><circle cx="354.9" cy="551.6" r="9.1"/><circle cx="412.4" cy="551.4" r="9.1"/><circle cx="362.6" cy="546.5" r="9.1"/><circle cx="429.9" cy="544.6" r="9.1"/><circle cx="411.9" cy="521.0" r="9.1"/><circle cx="432.6" cy="533.6" r="9.1"/><circle cx="376.4" cy="543.2" r="9.1"/><circle cx="359.4" cy="561.0" r="9.1"/><circle cx="350.8" cy="522.0" r="9.1"/><circle cx="373.0" cy="545.6" r="9.1"/><circle cx="423.0" cy="525.2" r="9.1"/><circle cx="434.1" cy="555.0" r="9.1"/><circle cx="373.6" cy="519.3" r="9.1"/><circle cx="382.2" cy="544.8" r="9.1"/><circle cx="430.6" cy="533.4" r="9.1"/><circle cx="363.7" cy="548.3" r="9.1"/><circle cx="402.1" cy="526.9" r="9.1"/><circle cx="363.0" cy="518.0" r="9.1"/><circle cx="366.1" cy="549.1" r="9.1"/><circle cx="391.9" cy="568.1" r="9.1"/><circle cx="393.0" cy="545.9" r="9.1"/><circle cx="353.3" cy="542.0" r="9.1"/><circle cx="343.8" cy="527.1" r="9.1"/><circle cx="382.3" cy="574.8" r="9.1"/><circle cx="327.9" cy="570.3" r="9.1"/><circle cx="426.2" cy="519.3" r="9.1"/><circle cx="416.8" cy="548.5" r="9.1"/><circle cx="335.1" cy="577.6" r="9.1"/><circle cx="317.1" cy="543.1" r="9.1"/><circle cx="399.5" cy="549.8" r="9.1"/><circle cx="360.5" cy="564.3" r="9.1"/><circle cx="348.7" cy="564.7" r="9.1"/><circle cx="379.6" cy="541.6" r="9.1"/><circle cx="354.5" cy="568.1" r="9.1"/><circle cx="389.5" cy="559.0" r="9.1"/><circle cx="318.7" cy="530.4" r="9.1"/><circle cx="366.6" cy="573.2" r="9.1"/><circle cx="389.0" cy="518.0" r="9.1"/><circle cx="435.5" cy="550.8" r="9.1"/><circle cx="393.7" cy="519.1" r="9.1"/><circle cx="369.3" cy="540.0" r="9.1"/><circle cx="351.6" cy="562.5" r="9.1"/><circle cx="429.6" cy="564.9" r="9.1"/><circle cx="364.5" cy="574.7" r="9.1"/><circle cx="321.7" cy="525.0" r="9.1"/><circle cx="362.9" cy="523.4" r="9.1"/><circle cx="415.6" cy="535.4" r="9.1"/><circle cx="396.9" cy="555.7" r="9.1"/><circle cx="351.0" cy="577.1" r="9.1"/><circle cx="370.2" cy="525.8" r="9.1"/><circle cx="369.1" cy="543.1" r="9.1"/><circle cx="383.5" cy="549.5" r="9.1"/><circle cx="394.1" cy="526.8" r="9.1"/><circle cx="435.2" cy="536.7" r="9.1"/><circle cx="437.1" cy="567.9" r="9.1"/><circle cx="349.6" cy="546.4" r="9.1"/><circle cx="318.0" cy="544.0" r="9.1"/><circle cx="432.1" cy="577.3" r="9.1"/><circle cx="407.8" cy="535.5" r="9.1"/><circle cx="347.4" cy="570.5" r="9.1"/><circle cx="350.6" cy="534.1" r="9.1"/><circle cx="411.6" cy="570.7" r="9.1"/><circle cx="345.4" cy="566.0" r="9.1"/><circle cx="410.7" cy="556.2" r="9.1"/><circle cx="343.0" cy="546.0" r="9.1"/><circle cx="419.2" cy="562.9" r="9.1"/><circle cx="413.1" cy="577.9" r="9.1"/><circle cx="412.8" cy="530.3" r="9.1"/><circle cx="327.3" cy="552.0" r="9.1"/><circle cx="367.4" cy="553.2" r="9.1"/><circle cx="321.0" cy="525.1" r="9.1"/><circle cx="340.5" cy="574.7" r="9.1"/><circle cx="421.8" cy="569.3" r="9.1"/><circle cx="386.8" cy="526.4" r="9.1"/><circle cx="414.5" cy="571.9" r="9.1"/><circle cx="414.4" cy="519.9" r="9.1"/><circle cx="335.2" cy="522.3" r="9.1"/><circle cx="427.1" cy="576.1" r="9.1"/><circle cx="389.5" cy="574.5" r="9.1"/><circle cx="403.0" cy="548.7" r="9.1"/></g></svg>
<span class="t" style="top:635px;font:400 18px/18px 'Liberation Sans',sans-serif;color:#404040;letter-spacing:-0.18px;left:245.00px;transform:translateX(-50%);">Количество заказов (F)</span>
<span class="t" style="top:680px;font:400 15px/15px 'Liberation Sans',sans-serif;color:#595959;letter-spacing:-0.03px;left:44.40px;transform:translateX(-50%);">0</span>
<span class="t" style="top:680px;font:400 15px/15px 'Liberation Sans',sans-serif;color:#595959;letter-spacing:-0.03px;left:105.60px;transform:translateX(-50%);">200</span>
<span class="t" style="top:680px;font:400 15px/15px 'Liberation Sans',sans-serif;color:#595959;letter-spacing:-0.03px;left:167.10px;transform:translateX(-50%);">400</span>
<span class="t" style="top:680px;font:400 15px/15px 'Liberation Sans',sans-serif;color:#595959;letter-spacing:-0.03px;left:228.50px;transform:translateX(-50%);">600</span>
<span class="t" style="top:680px;font:400 15px/15px 'Liberation Sans',sans-serif;color:#595959;letter-spacing:-0.03px;left:290.00px;transform:translateX(-50%);">800</span>
<span class="t" style="top:680px;font:400 15px/15px 'Liberation Sans',sans-serif;color:#595959;letter-spacing:-0.03px;left:351.60px;transform:translateX(-50%);">1 000</span>
<span class="t" style="top:680px;font:400 15px/15px 'Liberation Sans',sans-serif;color:#595959;letter-spacing:-0.03px;left:413.10px;transform:translateX(-50%);">1 200</span>
<span class="t" style="top:680px;font:400 15px/15px 'Liberation Sans',sans-serif;color:#595959;letter-spacing:-0.03px;left:450.00px;">1 …</span>
<svg class="b" style="left:0;top:0" width="490" height="1080" viewBox="0 0 490 1080"><path d="M44.25 698V839.5" stroke="#ebebeb" stroke-width="1"/><path d="M105.25 698V839.5" stroke="#ebebeb" stroke-width="1"/><path d="M167.5 698V839.5" stroke="#ebebeb" stroke-width="1"/><path d="M228.75 698V839.5" stroke="#ebebeb" stroke-width="1"/><path d="M290 698V839.5" stroke="#ebebeb" stroke-width="1"/><path d="M351.25 698V839.5" stroke="#ebebeb" stroke-width="1"/><path d="M412.5 698V839.5" stroke="#ebebeb" stroke-width="1"/><path d="M473.25 698V839.5" stroke="#ebebeb" stroke-width="1"/><path d="M12 708.25H477" stroke="#ebebeb" stroke-width="1.2"/><g fill="#d3d3d3" stroke="#8c8c8c" stroke-width="0.5"><circle cx="124.1" cy="789.5" r="9.1"/><circle cx="124.0" cy="745.0" r="9.1"/><circle cx="121.1" cy="749.2" r="9.1"/><circle cx="122.8" cy="796.1" r="9.1"/><circle cx="123.8" cy="787.4" r="9.1"/><circle cx="124.1" cy="760.3" r="9.1"/><circle cx="120.8" cy="751.8" r="9.1"/><circle cx="122.5" cy="763.1" r="9.1"/><circle cx="123.9" cy="767.1" r="9.1"/><circle cx="119.6" cy="758.7" r="9.1"/><circle cx="121.9" cy="759.4" r="9.1"/><circle cx="119.9" cy="793.8" r="9.1"/><circle cx="118.1" cy="748.5" r="9.1"/><circle cx="117.8" cy="789.9" r="9.1"/><circle cx="118.4" cy="752.4" r="9.1"/><circle cx="116.8" cy="749.0" r="9.1"/><circle cx="123.0" cy="795.2" r="9.1"/><circle cx="123.7" cy="783.6" r="9.1"/><circle cx="123.4" cy="755.8" r="9.1"/><circle cx="114.9" cy="751.1" r="9.1"/><circle cx="119.6" cy="760.1" r="9.1"/><circle cx="123.9" cy="801.2" r="9.1"/><circle cx="114.3" cy="786.0" r="9.1"/><circle cx="124.0" cy="803.5" r="9.1"/><circle cx="115.0" cy="749.7" r="9.1"/><circle cx="113.1" cy="759.2" r="9.1"/><circle cx="112.7" cy="803.1" r="9.1"/><circle cx="122.1" cy="753.4" r="9.1"/><circle cx="115.7" cy="760.1" r="9.1"/><circle cx="120.9" cy="779.7" r="9.1"/><circle cx="122.0" cy="786.0" r="9.1"/><circle cx="119.6" cy="803.2" r="9.1"/><circle cx="116.7" cy="797.2" r="9.1"/><circle cx="118.9" cy="787.6" r="9.1"/><circle cx="112.9" cy="779.8" r="9.1"/><circle cx="114.8" cy="790.0" r="9.1"/><circle cx="119.4" cy="801.8" r="9.1"/><circle cx="122.0" cy="750.3" r="9.1"/><circle cx="122.6" cy="781.9" r="9.1"/><circle cx="111.9" cy="785.2" r="9.1"/><circle cx="113.1" cy="750.0" r="9.1"/><circle cx="112.0" cy="803.5" r="9.1"/><circle cx="115.3" cy="756.2" r="9.1"/><circle cx="113.9" cy="777.1" r="9.1"/><circle cx="115.4" cy="775.3" r="9.1"/><circle cx="119.8" cy="775.1" r="9.1"/><circle cx="121.4" cy="763.9" r="9.1"/><circle cx="118.2" cy="760.4" r="9.1"/><circle cx="112.9" cy="772.4" r="9.1"/><circle cx="116.0" cy="802.4" r="9.1"/><circle cx="111.6" cy="789.2" r="9.1"/><circle cx="108.8" cy="786.0" r="9.1"/><circle cx="108.9" cy="770.5" r="9.1"/><circle cx="115.0" cy="791.7" r="9.1"/><circle cx="119.4" cy="754.6" r="9.1"/><circle cx="116.4" cy="777.8" r="9.1"/><circle cx="113.4" cy="753.9" r="9.1"/><circle cx="118.3" cy="761.8" r="9.1"/><circle cx="105.9" cy="790.3" r="9.1"/><circle cx="114.2" cy="794.2" r="9.1"/><circle cx="106.3" cy="754.3" r="9.1"/><circle cx="109.2" cy="789.6" r="9.1"/><circle cx="112.8" cy="799.1" r="9.1"/><circle cx="116.4" cy="767.5" r="9.1"/><circle cx="114.5" cy="751.2" r="9.1"/><circle cx="108.5" cy="766.7" r="9.1"/><circle cx="105.0" cy="799.9" r="9.1"/><circle cx="108.1" cy="784.1" r="9.1"/><circle cx="112.0" cy="745.0" r="9.1"/><circle cx="106.7" cy="779.2" r="9.1"/><circle cx="104.9" cy="753.6" r="9.1"/><circle cx="106.8" cy="763.8" r="9.1"/><circle cx="110.3" cy="771.3" r="9.1"/><circle cx="115.5" cy="801.9" r="9.1"/><circle cx="104.0" cy="762.0" r="9.1"/><circle cx="107.9" cy="764.8" r="9.1"/><circle cx="104.6" cy="801.6" r="9.1"/><circle cx="114.9" cy="789.1" r="9.1"/><circle cx="115.1" cy="748.1" r="9.1"/><circle cx="110.5" cy="787.5" r="9.1"/><circle cx="106.1" cy="781.1" r="9.1"/><circle cx="113.1" cy="764.2" r="9.1"/><circle cx="104.2" cy="798.5" r="9.1"/><circle cx="109.4" cy="775.3" r="9.1"/><circle cx="106.5" cy="798.4" r="9.1"/><circle cx="113.1" cy="795.5" r="9.1"/><circle cx="102.2" cy="787.2" r="9.1"/><circle cx="99.0" cy="801.8" r="9.1"/><circle cx="112.1" cy="791.2" r="9.1"/><circle cx="101.3" cy="801.0" r="9.1"/><circle cx="107.6" cy="776.4" r="9.1"/><circle cx="104.3" cy="750.5" r="9.1"/><circle cx="98.0" cy="799.0" r="9.1"/><circle cx="103.2" cy="777.0" r="9.1"/><circle cx="103.3" cy="756.3" r="9.1"/><circle cx="110.5" cy="769.7" r="9.1"/><circle cx="99.9" cy="790.8" r="9.1"/><circle cx="99.7" cy="773.3" r="9.1"/><circle cx="103.6" cy="772.9" r="9.1"/><circle cx="106.4" cy="797.0" r="9.1"/><circle cx="107.0" cy="752.0" r="9.1"/><circle cx="100.0" cy="745.0" r="9.1"/><circle cx="102.0" cy="757.2" r="9.1"/><circle cx="98.1" cy="769.7" r="9.1"/><circle cx="96.7" cy="789.5" r="9.1"/><circle cx="108.2" cy="771.7" r="9.1"/><circle cx="97.8" cy="771.7" r="9.1"/><circle cx="101.3" cy="771.5" r="9.1"/><circle cx="104.0" cy="791.7" r="9.1"/><circle cx="103.6" cy="780.1" r="9.1"/><circle cx="106.2" cy="772.7" r="9.1"/><circle cx="94.9" cy="767.5" r="9.1"/><circle cx="106.2" cy="778.6" r="9.1"/><circle cx="101.4" cy="795.1" r="9.1"/><circle cx="100.6" cy="758.7" r="9.1"/><circle cx="97.3" cy="803.4" r="9.1"/><circle cx="92.7" cy="802.5" r="9.1"/><circle cx="97.2" cy="755.5" r="9.1"/><circle cx="93.4" cy="753.5" r="9.1"/><circle cx="98.4" cy="779.5" r="9.1"/><circle cx="101.2" cy="774.2" r="9.1"/><circle cx="92.8" cy="796.3" r="9.1"/><circle cx="91.9" cy="785.1" r="9.1"/><circle cx="98.6" cy="748.2" r="9.1"/><circle cx="96.0" cy="802.0" r="9.1"/><circle cx="100.0" cy="803.5" r="9.1"/><circle cx="103.0" cy="769.2" r="9.1"/><circle cx="99.5" cy="762.1" r="9.1"/><circle cx="102.4" cy="746.8" r="9.1"/><circle cx="94.5" cy="771.4" r="9.1"/><circle cx="90.7" cy="759.5" r="9.1"/><circle cx="88.9" cy="766.8" r="9.1"/><circle cx="87.7" cy="772.9" r="9.1"/><circle cx="94.8" cy="795.5" r="9.1"/><circle cx="101.4" cy="795.8" r="9.1"/><circle cx="89.8" cy="755.3" r="9.1"/><circle cx="87.2" cy="770.0" r="9.1"/><circle cx="88.2" cy="759.8" r="9.1"/><circle cx="99.8" cy="752.8" r="9.1"/><circle cx="91.2" cy="751.8" r="9.1"/><circle cx="94.6" cy="799.2" r="9.1"/><circle cx="89.0" cy="762.2" r="9.1"/><circle cx="96.0" cy="780.3" r="9.1"/><circle cx="93.5" cy="774.1" r="9.1"/><circle cx="91.6" cy="755.6" r="9.1"/><circle cx="90.7" cy="793.6" r="9.1"/><circle cx="89.5" cy="796.3" r="9.1"/><circle cx="96.6" cy="780.9" r="9.1"/><circle cx="88.5" cy="779.2" r="9.1"/><circle cx="93.4" cy="793.3" r="9.1"/><circle cx="92.0" cy="779.7" r="9.1"/><circle cx="88.0" cy="745.0" r="9.1"/><circle cx="87.8" cy="781.6" r="9.1"/><circle cx="86.5" cy="767.8" r="9.1"/><circle cx="93.5" cy="774.7" r="9.1"/><circle cx="90.3" cy="796.1" r="9.1"/><circle cx="83.0" cy="754.3" r="9.1"/><circle cx="85.7" cy="785.2" r="9.1"/><circle cx="88.4" cy="798.9" r="9.1"/><circle cx="88.7" cy="752.2" r="9.1"/><circle cx="86.9" cy="750.0" r="9.1"/><circle cx="88.0" cy="803.5" r="9.1"/><circle cx="94.4" cy="750.3" r="9.1"/><circle cx="95.4" cy="800.7" r="9.1"/><circle cx="83.7" cy="745.5" r="9.1"/><circle cx="81.6" cy="751.1" r="9.1"/><circle cx="88.6" cy="787.2" r="9.1"/><circle cx="82.3" cy="771.4" r="9.1"/><circle cx="88.7" cy="747.5" r="9.1"/><circle cx="85.6" cy="752.7" r="9.1"/><circle cx="91.9" cy="773.2" r="9.1"/><circle cx="91.1" cy="781.8" r="9.1"/><circle cx="82.0" cy="779.3" r="9.1"/><circle cx="88.3" cy="800.3" r="9.1"/><circle cx="83.2" cy="751.4" r="9.1"/><circle cx="90.7" cy="760.8" r="9.1"/><circle cx="85.1" cy="772.9" r="9.1"/><circle cx="80.2" cy="767.0" r="9.1"/><circle cx="91.0" cy="797.1" r="9.1"/><circle cx="79.4" cy="776.6" r="9.1"/><circle cx="85.7" cy="763.5" r="9.1"/><circle cx="81.0" cy="798.4" r="9.1"/><circle cx="86.8" cy="783.1" r="9.1"/><circle cx="88.4" cy="770.9" r="9.1"/><circle cx="89.2" cy="790.6" r="9.1"/><circle cx="89.1" cy="769.3" r="9.1"/><circle cx="83.3" cy="775.5" r="9.1"/><circle cx="86.0" cy="774.8" r="9.1"/><circle cx="81.9" cy="755.0" r="9.1"/><circle cx="81.8" cy="802.7" r="9.1"/><circle cx="84.4" cy="785.3" r="9.1"/><circle cx="77.7" cy="788.3" r="9.1"/><circle cx="78.1" cy="773.8" r="9.1"/><circle cx="87.6" cy="791.1" r="9.1"/><circle cx="83.1" cy="795.0" r="9.1"/><circle cx="86.8" cy="754.5" r="9.1"/><circle cx="75.4" cy="789.3" r="9.1"/><circle cx="75.5" cy="767.3" r="9.1"/><circle cx="76.0" cy="745.0" r="9.1"/><circle cx="88.1" cy="762.4" r="9.1"/><circle cx="78.1" cy="782.6" r="9.1"/><circle cx="83.1" cy="780.2" r="9.1"/><circle cx="74.5" cy="797.4" r="9.1"/><circle cx="77.2" cy="754.9" r="9.1"/><circle cx="77.3" cy="774.9" r="9.1"/><circle cx="74.3" cy="754.7" r="9.1"/><circle cx="77.8" cy="799.6" r="9.1"/><circle cx="74.3" cy="747.8" r="9.1"/><circle cx="83.0" cy="766.0" r="9.1"/><circle cx="87.4" cy="784.5" r="9.1"/><circle cx="81.3" cy="774.1" r="9.1"/><circle cx="85.5" cy="750.5" r="9.1"/><circle cx="82.8" cy="795.2" r="9.1"/><circle cx="86.0" cy="783.4" r="9.1"/><circle cx="75.9" cy="803.0" r="9.1"/><circle cx="78.3" cy="760.2" r="9.1"/><circle cx="84.9" cy="788.0" r="9.1"/><circle cx="85.4" cy="747.0" r="9.1"/><circle cx="78.1" cy="750.8" r="9.1"/><circle cx="79.4" cy="783.9" r="9.1"/><circle cx="80.6" cy="749.9" r="9.1"/><circle cx="76.5" cy="775.5" r="9.1"/><circle cx="77.2" cy="755.7" r="9.1"/><circle cx="83.0" cy="798.5" r="9.1"/><circle cx="83.8" cy="782.9" r="9.1"/><circle cx="75.3" cy="746.1" r="9.1"/><circle cx="78.5" cy="776.2" r="9.1"/><circle cx="74.3" cy="790.8" r="9.1"/><circle cx="76.1" cy="795.7" r="9.1"/><circle cx="76.1" cy="751.9" r="9.1"/></g><g fill="#c85000" stroke="none" stroke-width="0.5"><circle cx="67.0" cy="783.8" r="9.1"/></g><g fill="#d3d3d3" stroke="#8c8c8c" stroke-width="0.5"><circle cx="72.3" cy="791.2" r="9.1"/><circle cx="74.7" cy="789.8" r="9.1"/><circle cx="80.9" cy="746.6" r="9.1"/><circle cx="83.4" cy="783.5" r="9.1"/><circle cx="73.9" cy="745.7" r="9.1"/><circle cx="74.5" cy="761.1" r="9.1"/><circle cx="74.9" cy="776.5" r="9.1"/><circle cx="79.1" cy="765.2" r="9.1"/><circle cx="81.0" cy="763.9" r="9.1"/><circle cx="68.5" cy="769.3" r="9.1"/><circle cx="82.0" cy="786.8" r="9.1"/><circle cx="68.2" cy="776.6" r="9.1"/><circle cx="69.5" cy="748.9" r="9.1"/><circle cx="73.7" cy="754.6" r="9.1"/><circle cx="68.6" cy="779.2" r="9.1"/><circle cx="81.3" cy="773.3" r="9.1"/><circle cx="68.3" cy="767.0" r="9.1"/><circle cx="78.4" cy="758.5" r="9.1"/><circle cx="76.2" cy="757.5" r="9.1"/><circle cx="67.8" cy="794.8" r="9.1"/><circle cx="76.0" cy="803.5" r="9.1"/><circle cx="79.6" cy="765.8" r="9.1"/><circle cx="80.3" cy="755.0" r="9.1"/><circle cx="75.6" cy="794.5" r="9.1"/><circle cx="66.9" cy="788.7" r="9.1"/><circle cx="78.5" cy="761.9" r="9.1"/><circle cx="78.2" cy="794.2" r="9.1"/><circle cx="74.5" cy="776.0" r="9.1"/><circle cx="72.2" cy="783.2" r="9.1"/><circle cx="66.5" cy="747.4" r="9.1"/><circle cx="67.1" cy="765.1" r="9.1"/><circle cx="68.5" cy="766.9" r="9.1"/><circle cx="70.5" cy="759.4" r="9.1"/><circle cx="77.1" cy="756.8" r="9.1"/><circle cx="72.0" cy="753.7" r="9.1"/><circle cx="65.3" cy="790.5" r="9.1"/><circle cx="69.4" cy="776.3" r="9.1"/><circle cx="64.2" cy="800.1" r="9.1"/><circle cx="70.3" cy="752.4" r="9.1"/><circle cx="73.3" cy="773.2" r="9.1"/><circle cx="74.4" cy="766.7" r="9.1"/><circle cx="76.2" cy="764.5" r="9.1"/><circle cx="65.9" cy="799.4" r="9.1"/><circle cx="65.5" cy="756.9" r="9.1"/><circle cx="70.7" cy="785.7" r="9.1"/><circle cx="64.3" cy="750.6" r="9.1"/><circle cx="67.8" cy="770.8" r="9.1"/><circle cx="65.7" cy="758.8" r="9.1"/><circle cx="67.5" cy="770.5" r="9.1"/><circle cx="67.1" cy="786.3" r="9.1"/><circle cx="71.1" cy="803.5" r="9.1"/><circle cx="66.3" cy="783.3" r="9.1"/><circle cx="67.3" cy="772.1" r="9.1"/><circle cx="69.2" cy="786.7" r="9.1"/><circle cx="71.5" cy="760.3" r="9.1"/><circle cx="61.5" cy="750.7" r="9.1"/><circle cx="61.9" cy="770.5" r="9.1"/><circle cx="61.5" cy="796.8" r="9.1"/><circle cx="73.8" cy="785.3" r="9.1"/><circle cx="64.8" cy="782.6" r="9.1"/><circle cx="69.1" cy="777.4" r="9.1"/><circle cx="72.9" cy="785.3" r="9.1"/><circle cx="67.4" cy="788.8" r="9.1"/><circle cx="62.5" cy="792.0" r="9.1"/><circle cx="64.9" cy="760.3" r="9.1"/><circle cx="72.6" cy="779.7" r="9.1"/><circle cx="69.6" cy="778.6" r="9.1"/><circle cx="60.3" cy="786.0" r="9.1"/><circle cx="72.9" cy="797.0" r="9.1"/><circle cx="63.9" cy="773.4" r="9.1"/><circle cx="69.1" cy="751.3" r="9.1"/><circle cx="66.9" cy="764.4" r="9.1"/><circle cx="64.0" cy="803.5" r="9.1"/><circle cx="62.5" cy="772.2" r="9.1"/><circle cx="62.2" cy="780.6" r="9.1"/><circle cx="70.2" cy="762.6" r="9.1"/><circle cx="59.1" cy="758.9" r="9.1"/><circle cx="69.9" cy="761.2" r="9.1"/><circle cx="58.7" cy="754.7" r="9.1"/><circle cx="65.7" cy="761.5" r="9.1"/><circle cx="66.3" cy="759.3" r="9.1"/><circle cx="61.9" cy="788.6" r="9.1"/><circle cx="57.4" cy="795.9" r="9.1"/><circle cx="63.8" cy="758.6" r="9.1"/><circle cx="61.7" cy="765.0" r="9.1"/><circle cx="68.0" cy="748.6" r="9.1"/><circle cx="59.6" cy="754.6" r="9.1"/><circle cx="62.5" cy="761.0" r="9.1"/><circle cx="68.4" cy="780.2" r="9.1"/><circle cx="63.4" cy="780.1" r="9.1"/><circle cx="61.0" cy="789.2" r="9.1"/><circle cx="66.5" cy="782.8" r="9.1"/><circle cx="62.4" cy="799.3" r="9.1"/><circle cx="60.2" cy="788.2" r="9.1"/><circle cx="62.9" cy="767.5" r="9.1"/><circle cx="55.1" cy="798.9" r="9.1"/><circle cx="62.9" cy="768.4" r="9.1"/><circle cx="66.2" cy="799.5" r="9.1"/><circle cx="54.9" cy="775.0" r="9.1"/><circle cx="64.8" cy="761.4" r="9.1"/><circle cx="55.9" cy="780.1" r="9.1"/><circle cx="62.0" cy="753.2" r="9.1"/><circle cx="62.0" cy="765.8" r="9.1"/><circle cx="58.9" cy="787.2" r="9.1"/><circle cx="65.7" cy="750.6" r="9.1"/><circle cx="59.8" cy="748.1" r="9.1"/><circle cx="54.1" cy="791.3" r="9.1"/><circle cx="59.8" cy="757.7" r="9.1"/><circle cx="52.6" cy="783.6" r="9.1"/><circle cx="57.8" cy="799.1" r="9.1"/><circle cx="57.6" cy="749.2" r="9.1"/><circle cx="60.2" cy="758.5" r="9.1"/><circle cx="55.9" cy="753.0" r="9.1"/><circle cx="55.8" cy="800.1" r="9.1"/><circle cx="54.7" cy="802.1" r="9.1"/><circle cx="57.4" cy="772.8" r="9.1"/><circle cx="57.1" cy="800.8" r="9.1"/><circle cx="59.5" cy="799.0" r="9.1"/><circle cx="51.7" cy="753.5" r="9.1"/><circle cx="64.0" cy="745.0" r="9.1"/><circle cx="56.7" cy="763.0" r="9.1"/><circle cx="56.7" cy="786.7" r="9.1"/><circle cx="55.5" cy="745.0" r="9.1"/><circle cx="55.9" cy="783.8" r="9.1"/><circle cx="55.3" cy="763.8" r="9.1"/><circle cx="57.3" cy="754.3" r="9.1"/><circle cx="64.0" cy="760.7" r="9.1"/><circle cx="53.7" cy="770.3" r="9.1"/><circle cx="58.3" cy="802.4" r="9.1"/><circle cx="50.9" cy="761.4" r="9.1"/><circle cx="54.7" cy="762.7" r="9.1"/><circle cx="60.7" cy="789.2" r="9.1"/><circle cx="54.7" cy="784.4" r="9.1"/><circle cx="55.4" cy="783.5" r="9.1"/><circle cx="59.6" cy="756.9" r="9.1"/><circle cx="54.1" cy="766.4" r="9.1"/><circle cx="58.7" cy="786.2" r="9.1"/><circle cx="51.2" cy="793.1" r="9.1"/><circle cx="51.4" cy="782.2" r="9.1"/><circle cx="60.3" cy="751.4" r="9.1"/><circle cx="62.9" cy="770.0" r="9.1"/><circle cx="51.5" cy="768.1" r="9.1"/><circle cx="62.4" cy="746.3" r="9.1"/><circle cx="52.1" cy="794.1" r="9.1"/><circle cx="50.6" cy="753.8" r="9.1"/><circle cx="51.5" cy="793.0" r="9.1"/><circle cx="52.1" cy="781.2" r="9.1"/><circle cx="50.7" cy="778.1" r="9.1"/><circle cx="57.1" cy="765.4" r="9.1"/><circle cx="50.5" cy="796.0" r="9.1"/><circle cx="52.5" cy="798.9" r="9.1"/><circle cx="55.1" cy="793.7" r="9.1"/><circle cx="57.0" cy="769.2" r="9.1"/><circle cx="55.1" cy="794.7" r="9.1"/><circle cx="51.6" cy="774.3" r="9.1"/><circle cx="52.0" cy="745.0" r="9.1"/><circle cx="58.6" cy="755.6" r="9.1"/><circle cx="51.0" cy="800.5" r="9.1"/><circle cx="52.9" cy="799.4" r="9.1"/><circle cx="50.6" cy="793.7" r="9.1"/><circle cx="50.6" cy="785.5" r="9.1"/><circle cx="54.3" cy="763.1" r="9.1"/><circle cx="55.3" cy="793.7" r="9.1"/><circle cx="50.9" cy="751.5" r="9.1"/><circle cx="51.7" cy="768.3" r="9.1"/><circle cx="52.9" cy="763.6" r="9.1"/><circle cx="58.0" cy="752.1" r="9.1"/><circle cx="51.7" cy="781.6" r="9.1"/><circle cx="56.4" cy="771.4" r="9.1"/><circle cx="54.6" cy="757.5" r="9.1"/><circle cx="56.4" cy="747.0" r="9.1"/><circle cx="56.2" cy="794.3" r="9.1"/><circle cx="55.0" cy="790.0" r="9.1"/><circle cx="58.9" cy="751.8" r="9.1"/><circle cx="56.9" cy="753.8" r="9.1"/><circle cx="57.8" cy="750.4" r="9.1"/><circle cx="51.6" cy="746.5" r="9.1"/><circle cx="50.9" cy="748.5" r="9.1"/><circle cx="50.8" cy="778.4" r="9.1"/><circle cx="52.3" cy="778.0" r="9.1"/><circle cx="52.4" cy="789.0" r="9.1"/><circle cx="53.9" cy="801.9" r="9.1"/><circle cx="52.3" cy="747.3" r="9.1"/><circle cx="56.4" cy="754.3" r="9.1"/><circle cx="50.5" cy="748.0" r="9.1"/><circle cx="50.5" cy="784.0" r="9.1"/><circle cx="52.0" cy="803.5" r="9.1"/><circle cx="52.2" cy="763.5" r="9.1"/><circle cx="50.5" cy="746.6" r="9.1"/><circle cx="51.3" cy="789.5" r="9.1"/><circle cx="53.2" cy="798.3" r="9.1"/><circle cx="50.5" cy="760.0" r="9.1"/><circle cx="50.7" cy="791.4" r="9.1"/><circle cx="50.7" cy="749.4" r="9.1"/><circle cx="50.6" cy="784.2" r="9.1"/><circle cx="50.7" cy="747.7" r="9.1"/><circle cx="52.5" cy="769.0" r="9.1"/><circle cx="50.6" cy="791.9" r="9.1"/><circle cx="53.5" cy="769.5" r="9.1"/><circle cx="52.4" cy="803.3" r="9.1"/><circle cx="51.0" cy="786.1" r="9.1"/><circle cx="50.5" cy="756.6" r="9.1"/><circle cx="52.0" cy="798.6" r="9.1"/><circle cx="50.9" cy="753.1" r="9.1"/><circle cx="50.8" cy="747.0" r="9.1"/><circle cx="51.8" cy="747.7" r="9.1"/><circle cx="50.5" cy="759.2" r="9.1"/><circle cx="50.5" cy="772.0" r="9.1"/><circle cx="50.6" cy="796.0" r="9.1"/></g><g fill="#a5a3aa" stroke="#807e85" stroke-width="0.5"><circle cx="135.0" cy="751.0" r="9.1"/><circle cx="153.8" cy="745.5" r="9.1"/><circle cx="162.5" cy="745.5" r="9.1"/><circle cx="182.5" cy="745.0" r="9.1"/><circle cx="196.2" cy="751.0" r="9.1"/><circle cx="185.0" cy="758.0" r="9.1"/><circle cx="202.5" cy="764.5" r="9.1"/><circle cx="203.8" cy="771.0" r="9.1"/><circle cx="165.0" cy="764.5" r="9.1"/><circle cx="152.5" cy="764.5" r="9.1"/><circle cx="158.0" cy="758.0" r="9.1"/><circle cx="147.0" cy="758.0" r="9.1"/><circle cx="181.2" cy="777.5" r="9.1"/><circle cx="163.8" cy="784.5" r="9.1"/><circle cx="150.0" cy="790.0" r="9.1"/><circle cx="132.5" cy="785.0" r="9.1"/><circle cx="181.2" cy="790.5" r="9.1"/><circle cx="182.5" cy="803.0" r="9.1"/><circle cx="146.2" cy="803.0" r="9.1"/><circle cx="172.0" cy="796.0" r="9.1"/><circle cx="140.0" cy="796.0" r="9.1"/><circle cx="160.0" cy="775.0" r="9.1"/><circle cx="170.0" cy="790.0" r="9.1"/><circle cx="176.0" cy="803.0" r="9.1"/><circle cx="138.0" cy="803.0" r="9.1"/></g><g fill="#d3d3d3" stroke="#8c8c8c" stroke-width="0.5"><circle cx="140.0" cy="765.0" r="9.1"/><circle cx="163.8" cy="801.2" r="9.1"/><circle cx="128.0" cy="770.0" r="9.1"/><circle cx="126.0" cy="790.0" r="9.1"/><circle cx="130.0" cy="758.0" r="9.1"/></g><g fill="#60a3d0" stroke="#4a86b0" stroke-width="0.5"><circle cx="267.5" cy="745.8" r="9.1"/><circle cx="220.8" cy="784.5" r="9.1"/><circle cx="223.8" cy="777.5" r="9.1"/><circle cx="232.0" cy="790.5" r="9.1"/><circle cx="242.5" cy="803.0" r="9.1"/><circle cx="244.5" cy="797.0" r="9.1"/></g><g fill="#326496" stroke="none" stroke-width="0.5"><circle cx="438.0" cy="752.0" r="9.1"/></g></svg>
<span class="t" style="top:862px;font:400 18px/18px 'Liberation Sans',sans-serif;color:#404040;letter-spacing:-0.18px;left:245.00px;transform:translateX(-50%);">Продажи (M)</span>
<span class="t" style="top:906px;font:400 15px/15px 'Liberation Sans',sans-serif;color:#595959;letter-spacing:-0.03px;left:48.75px;transform:translateX(-50%);">0</span>
<span class="t" style="top:906px;font:400 15px/15px 'Liberation Sans',sans-serif;color:#595959;letter-spacing:-0.03px;left:139.40px;transform:translateX(-50%);">20 000 000</span>
<span class="t" style="top:906px;font:400 15px/15px 'Liberation Sans',sans-serif;color:#595959;letter-spacing:-0.03px;left:230.25px;transform:translateX(-50%);">40 000 000</span>
<span class="t" style="top:906px;font:400 15px/15px 'Liberation Sans',sans-serif;color:#595959;letter-spacing:-0.03px;left:320.60px;transform:translateX(-50%);">60 000 000</span>
<span class="t" style="top:906px;font:400 15px/15px 'Liberation Sans',sans-serif;color:#595959;letter-spacing:-0.03px;left:411.50px;transform:translateX(-50%);">80 000 000</span>
<svg class="b" style="left:0;top:0" width="490" height="1080" viewBox="0 0 490 1080"><path d="M48.75 925V1066" stroke="#ebebeb" stroke-width="1"/><path d="M140 925V1066" stroke="#ebebeb" stroke-width="1"/><path d="M230.25 925V1066" stroke="#ebebeb" stroke-width="1"/><path d="M321.25 925V1066" stroke="#ebebeb" stroke-width="1"/><path d="M411.75 925V1066" stroke="#ebebeb" stroke-width="1"/><path d="M12 935H477" stroke="#ebebeb" stroke-width="1.2"/><g fill="#c85000" stroke="none" stroke-width="0.5"><circle cx="56.5" cy="969.5" r="9.1"/></g><g fill="#a5a3aa" stroke="#807e85" stroke-width="0.5"><circle cx="47.0" cy="978.0" r="9.1"/></g><g fill="#d3d3d3" stroke="#8c8c8c" stroke-width="0.5"><circle cx="82.7" cy="1003.0" r="9.1"/><circle cx="135.7" cy="983.0" r="9.1"/><circle cx="65.1" cy="1001.7" r="9.1"/><circle cx="60.9" cy="992.9" r="9.1"/><circle cx="97.0" cy="980.1" r="9.1"/><circle cx="96.1" cy="993.0" r="9.1"/><circle cx="104.9" cy="974.9" r="9.1"/><circle cx="84.2" cy="1021.6" r="9.1"/><circle cx="133.8" cy="983.3" r="9.1"/><circle cx="128.4" cy="1011.5" r="9.1"/><circle cx="72.7" cy="1029.8" r="9.1"/><circle cx="50.5" cy="1021.0" r="9.1"/><circle cx="71.0" cy="1020.7" r="9.1"/><circle cx="102.6" cy="1006.7" r="9.1"/><circle cx="84.1" cy="990.4" r="9.1"/><circle cx="66.6" cy="973.6" r="9.1"/><circle cx="85.2" cy="994.6" r="9.1"/><circle cx="92.2" cy="1019.2" r="9.1"/><circle cx="66.4" cy="983.2" r="9.1"/><circle cx="129.5" cy="1017.4" r="9.1"/><circle cx="63.1" cy="989.1" r="9.1"/><circle cx="98.7" cy="1024.1" r="9.1"/><circle cx="78.0" cy="1031.0" r="9.1"/><circle cx="130.3" cy="1023.5" r="9.1"/><circle cx="112.1" cy="1023.3" r="9.1"/><circle cx="54.7" cy="1009.8" r="9.1"/><circle cx="51.0" cy="1014.3" r="9.1"/><circle cx="58.8" cy="1010.5" r="9.1"/><circle cx="120.7" cy="997.3" r="9.1"/><circle cx="77.2" cy="988.6" r="9.1"/><circle cx="72.2" cy="1024.3" r="9.1"/><circle cx="97.8" cy="989.6" r="9.1"/><circle cx="110.9" cy="1026.3" r="9.1"/><circle cx="59.0" cy="1020.3" r="9.1"/><circle cx="97.3" cy="1029.0" r="9.1"/><circle cx="92.5" cy="1017.8" r="9.1"/><circle cx="114.7" cy="1000.2" r="9.1"/><circle cx="98.4" cy="1021.3" r="9.1"/><circle cx="51.4" cy="1018.6" r="9.1"/><circle cx="69.7" cy="984.1" r="9.1"/><circle cx="120.9" cy="1003.3" r="9.1"/><circle cx="70.5" cy="1008.5" r="9.1"/><circle cx="56.9" cy="1022.9" r="9.1"/><circle cx="137.6" cy="980.9" r="9.1"/><circle cx="50.6" cy="1000.7" r="9.1"/><circle cx="92.2" cy="1028.5" r="9.1"/><circle cx="135.6" cy="1005.9" r="9.1"/><circle cx="61.4" cy="990.9" r="9.1"/><circle cx="121.9" cy="1014.2" r="9.1"/><circle cx="128.3" cy="1006.5" r="9.1"/><circle cx="50.5" cy="988.0" r="9.1"/><circle cx="68.4" cy="977.5" r="9.1"/><circle cx="52.2" cy="983.2" r="9.1"/><circle cx="127.1" cy="1025.3" r="9.1"/><circle cx="57.0" cy="1014.8" r="9.1"/><circle cx="77.5" cy="1013.7" r="9.1"/><circle cx="122.1" cy="1006.5" r="9.1"/><circle cx="136.9" cy="993.1" r="9.1"/><circle cx="113.1" cy="979.9" r="9.1"/><circle cx="97.6" cy="982.5" r="9.1"/><circle cx="52.0" cy="1016.7" r="9.1"/><circle cx="107.1" cy="1021.8" r="9.1"/><circle cx="117.7" cy="1027.9" r="9.1"/><circle cx="113.7" cy="981.0" r="9.1"/><circle cx="133.6" cy="983.6" r="9.1"/><circle cx="53.2" cy="1018.7" r="9.1"/><circle cx="128.4" cy="989.3" r="9.1"/><circle cx="105.8" cy="972.7" r="9.1"/><circle cx="68.7" cy="985.5" r="9.1"/><circle cx="109.1" cy="987.5" r="9.1"/><circle cx="65.2" cy="992.9" r="9.1"/><circle cx="52.3" cy="1008.6" r="9.1"/><circle cx="54.6" cy="974.9" r="9.1"/><circle cx="83.8" cy="1024.8" r="9.1"/><circle cx="65.0" cy="1031.0" r="9.1"/><circle cx="56.6" cy="993.6" r="9.1"/><circle cx="54.6" cy="1008.9" r="9.1"/><circle cx="130.0" cy="1031.0" r="9.1"/><circle cx="96.6" cy="1025.7" r="9.1"/><circle cx="124.9" cy="1004.2" r="9.1"/><circle cx="63.9" cy="1008.2" r="9.1"/><circle cx="69.0" cy="975.8" r="9.1"/><circle cx="118.2" cy="1029.1" r="9.1"/><circle cx="118.0" cy="1022.6" r="9.1"/><circle cx="73.0" cy="974.8" r="9.1"/><circle cx="137.8" cy="1008.3" r="9.1"/><circle cx="131.8" cy="987.8" r="9.1"/><circle cx="111.0" cy="1022.2" r="9.1"/><circle cx="108.3" cy="1009.0" r="9.1"/><circle cx="133.9" cy="984.0" r="9.1"/><circle cx="77.8" cy="977.3" r="9.1"/><circle cx="91.5" cy="974.0" r="9.1"/><circle cx="80.3" cy="976.4" r="9.1"/><circle cx="69.0" cy="1012.9" r="9.1"/><circle cx="101.3" cy="1029.5" r="9.1"/><circle cx="75.0" cy="1003.5" r="9.1"/><circle cx="88.5" cy="1006.5" r="9.1"/><circle cx="91.4" cy="1009.0" r="9.1"/><circle cx="52.0" cy="1031.0" r="9.1"/><circle cx="78.6" cy="1027.3" r="9.1"/><circle cx="51.5" cy="1009.0" r="9.1"/><circle cx="102.8" cy="980.3" r="9.1"/><circle cx="132.4" cy="976.6" r="9.1"/><circle cx="125.0" cy="1009.5" r="9.1"/><circle cx="55.3" cy="1014.5" r="9.1"/><circle cx="58.6" cy="1017.9" r="9.1"/><circle cx="74.4" cy="993.7" r="9.1"/><circle cx="105.9" cy="1025.3" r="9.1"/><circle cx="62.7" cy="996.9" r="9.1"/><circle cx="102.7" cy="985.4" r="9.1"/><circle cx="81.6" cy="977.9" r="9.1"/><circle cx="94.7" cy="1015.1" r="9.1"/><circle cx="76.3" cy="992.1" r="9.1"/><circle cx="117.1" cy="1002.2" r="9.1"/><circle cx="134.4" cy="985.2" r="9.1"/><circle cx="62.1" cy="1006.8" r="9.1"/><circle cx="55.0" cy="1009.6" r="9.1"/><circle cx="97.2" cy="1005.3" r="9.1"/><circle cx="101.0" cy="998.5" r="9.1"/><circle cx="105.7" cy="974.7" r="9.1"/><circle cx="77.6" cy="1003.9" r="9.1"/><circle cx="100.2" cy="1004.1" r="9.1"/><circle cx="78.5" cy="1029.3" r="9.1"/><circle cx="70.6" cy="993.5" r="9.1"/><circle cx="114.2" cy="1029.6" r="9.1"/><circle cx="52.7" cy="1008.6" r="9.1"/><circle cx="50.5" cy="985.0" r="9.1"/><circle cx="53.1" cy="983.8" r="9.1"/><circle cx="69.5" cy="1003.2" r="9.1"/><circle cx="66.5" cy="1023.2" r="9.1"/><circle cx="55.0" cy="1013.2" r="9.1"/><circle cx="68.7" cy="1013.9" r="9.1"/><circle cx="50.5" cy="997.0" r="9.1"/><circle cx="63.4" cy="1023.9" r="9.1"/><circle cx="68.7" cy="1016.3" r="9.1"/><circle cx="134.9" cy="987.7" r="9.1"/><circle cx="85.5" cy="1002.5" r="9.1"/><circle cx="56.3" cy="1018.1" r="9.1"/><circle cx="104.0" cy="1031.0" r="9.1"/><circle cx="68.2" cy="1012.1" r="9.1"/><circle cx="59.6" cy="1003.1" r="9.1"/><circle cx="72.1" cy="996.5" r="9.1"/><circle cx="85.3" cy="1009.4" r="9.1"/><circle cx="80.4" cy="1011.0" r="9.1"/><circle cx="116.1" cy="1011.1" r="9.1"/><circle cx="61.8" cy="986.1" r="9.1"/><circle cx="118.8" cy="1005.7" r="9.1"/><circle cx="122.9" cy="1019.4" r="9.1"/><circle cx="79.2" cy="977.5" r="9.1"/><circle cx="84.3" cy="1021.5" r="9.1"/><circle cx="132.1" cy="980.1" r="9.1"/><circle cx="50.7" cy="1001.3" r="9.1"/><circle cx="129.8" cy="1012.4" r="9.1"/><circle cx="65.4" cy="1004.1" r="9.1"/><circle cx="132.6" cy="989.1" r="9.1"/><circle cx="51.2" cy="1016.4" r="9.1"/><circle cx="89.7" cy="983.9" r="9.1"/><circle cx="76.2" cy="1022.7" r="9.1"/><circle cx="65.2" cy="978.5" r="9.1"/><circle cx="53.9" cy="1015.0" r="9.1"/><circle cx="105.1" cy="1030.5" r="9.1"/><circle cx="119.5" cy="986.5" r="9.1"/><circle cx="51.4" cy="998.4" r="9.1"/><circle cx="66.2" cy="1017.9" r="9.1"/><circle cx="75.7" cy="1003.8" r="9.1"/><circle cx="50.6" cy="985.7" r="9.1"/><circle cx="113.3" cy="986.9" r="9.1"/><circle cx="59.0" cy="1018.6" r="9.1"/><circle cx="50.7" cy="1019.6" r="9.1"/><circle cx="50.8" cy="1030.7" r="9.1"/><circle cx="131.2" cy="1022.5" r="9.1"/><circle cx="96.1" cy="999.8" r="9.1"/><circle cx="113.6" cy="1011.8" r="9.1"/><circle cx="55.6" cy="1016.9" r="9.1"/><circle cx="56.2" cy="998.3" r="9.1"/><circle cx="65.1" cy="1011.1" r="9.1"/><circle cx="58.6" cy="1024.4" r="9.1"/><circle cx="60.2" cy="1008.5" r="9.1"/><circle cx="94.0" cy="972.9" r="9.1"/><circle cx="126.9" cy="1011.8" r="9.1"/><circle cx="54.8" cy="1007.1" r="9.1"/><circle cx="50.5" cy="1009.0" r="9.1"/><circle cx="124.5" cy="1019.7" r="9.1"/><circle cx="81.7" cy="1012.6" r="9.1"/><circle cx="68.0" cy="993.4" r="9.1"/><circle cx="129.3" cy="1010.7" r="9.1"/><circle cx="58.3" cy="991.8" r="9.1"/><circle cx="58.5" cy="1022.8" r="9.1"/><circle cx="70.0" cy="1028.8" r="9.1"/><circle cx="105.1" cy="1013.3" r="9.1"/><circle cx="136.5" cy="1012.9" r="9.1"/><circle cx="50.9" cy="1010.9" r="9.1"/><circle cx="88.0" cy="971.5" r="9.1"/><circle cx="87.0" cy="977.9" r="9.1"/><circle cx="137.3" cy="982.4" r="9.1"/><circle cx="87.5" cy="1027.2" r="9.1"/><circle cx="100.2" cy="1000.7" r="9.1"/><circle cx="97.7" cy="1002.8" r="9.1"/><circle cx="83.0" cy="993.3" r="9.1"/><circle cx="59.7" cy="1015.6" r="9.1"/><circle cx="52.0" cy="995.5" r="9.1"/><circle cx="120.6" cy="1004.5" r="9.1"/><circle cx="66.8" cy="997.1" r="9.1"/><circle cx="78.2" cy="995.4" r="9.1"/><circle cx="65.5" cy="1028.8" r="9.1"/><circle cx="128.9" cy="1006.6" r="9.1"/><circle cx="87.1" cy="982.3" r="9.1"/><circle cx="88.2" cy="1031.0" r="9.1"/><circle cx="98.6" cy="995.9" r="9.1"/><circle cx="124.5" cy="975.8" r="9.1"/><circle cx="69.3" cy="977.4" r="9.1"/><circle cx="129.1" cy="1023.6" r="9.1"/><circle cx="98.0" cy="995.4" r="9.1"/><circle cx="95.6" cy="972.9" r="9.1"/><circle cx="66.3" cy="982.3" r="9.1"/><circle cx="51.2" cy="1013.4" r="9.1"/><circle cx="68.5" cy="1028.0" r="9.1"/><circle cx="60.7" cy="1001.6" r="9.1"/><circle cx="53.8" cy="1017.1" r="9.1"/><circle cx="110.7" cy="1003.2" r="9.1"/><circle cx="127.0" cy="971.5" r="9.1"/><circle cx="126.3" cy="977.2" r="9.1"/><circle cx="69.2" cy="1000.9" r="9.1"/><circle cx="126.8" cy="979.9" r="9.1"/><circle cx="137.1" cy="1016.0" r="9.1"/><circle cx="101.5" cy="979.9" r="9.1"/><circle cx="111.2" cy="991.0" r="9.1"/><circle cx="50.8" cy="1030.3" r="9.1"/><circle cx="66.8" cy="974.4" r="9.1"/><circle cx="105.2" cy="1030.7" r="9.1"/><circle cx="62.4" cy="1010.1" r="9.1"/><circle cx="52.5" cy="1019.8" r="9.1"/><circle cx="60.2" cy="980.0" r="9.1"/><circle cx="136.5" cy="983.9" r="9.1"/><circle cx="74.1" cy="1015.9" r="9.1"/><circle cx="55.6" cy="1009.1" r="9.1"/><circle cx="62.0" cy="980.9" r="9.1"/><circle cx="51.3" cy="1024.9" r="9.1"/><circle cx="73.1" cy="1005.0" r="9.1"/><circle cx="50.5" cy="979.7" r="9.1"/><circle cx="70.7" cy="1025.5" r="9.1"/><circle cx="50.5" cy="1012.8" r="9.1"/><circle cx="97.8" cy="1015.0" r="9.1"/><circle cx="115.1" cy="992.9" r="9.1"/><circle cx="127.8" cy="1031.0" r="9.1"/><circle cx="54.2" cy="980.0" r="9.1"/><circle cx="120.3" cy="973.8" r="9.1"/><circle cx="112.1" cy="978.4" r="9.1"/><circle cx="99.8" cy="978.0" r="9.1"/><circle cx="96.8" cy="990.5" r="9.1"/><circle cx="94.9" cy="980.1" r="9.1"/><circle cx="60.5" cy="987.4" r="9.1"/><circle cx="127.7" cy="1021.4" r="9.1"/><circle cx="117.8" cy="996.0" r="9.1"/><circle cx="88.6" cy="1013.2" r="9.1"/><circle cx="129.9" cy="1008.9" r="9.1"/><circle cx="88.7" cy="1027.2" r="9.1"/><circle cx="104.7" cy="980.5" r="9.1"/><circle cx="118.8" cy="984.7" r="9.1"/><circle cx="70.9" cy="972.2" r="9.1"/><circle cx="67.4" cy="1013.5" r="9.1"/><circle cx="124.0" cy="975.7" r="9.1"/><circle cx="72.3" cy="1017.6" r="9.1"/><circle cx="58.7" cy="1012.7" r="9.1"/><circle cx="100.1" cy="998.1" r="9.1"/><circle cx="91.9" cy="987.2" r="9.1"/><circle cx="61.7" cy="975.4" r="9.1"/><circle cx="52.2" cy="1020.2" r="9.1"/><circle cx="67.2" cy="1015.6" r="9.1"/><circle cx="70.6" cy="1010.8" r="9.1"/><circle cx="80.5" cy="983.2" r="9.1"/><circle cx="82.2" cy="1011.9" r="9.1"/><circle cx="91.0" cy="1031.0" r="9.1"/><circle cx="51.0" cy="1010.2" r="9.1"/><circle cx="128.0" cy="1021.5" r="9.1"/><circle cx="51.6" cy="1013.9" r="9.1"/><circle cx="107.0" cy="973.5" r="9.1"/><circle cx="89.2" cy="975.7" r="9.1"/><circle cx="129.0" cy="992.2" r="9.1"/><circle cx="54.0" cy="997.1" r="9.1"/><circle cx="80.3" cy="1000.6" r="9.1"/><circle cx="96.7" cy="976.6" r="9.1"/><circle cx="93.8" cy="981.1" r="9.1"/><circle cx="111.1" cy="1001.7" r="9.1"/><circle cx="92.1" cy="1009.2" r="9.1"/><circle cx="132.2" cy="999.1" r="9.1"/><circle cx="54.2" cy="1004.1" r="9.1"/><circle cx="69.2" cy="993.3" r="9.1"/><circle cx="112.7" cy="980.3" r="9.1"/><circle cx="68.0" cy="1004.2" r="9.1"/><circle cx="87.9" cy="999.7" r="9.1"/><circle cx="60.7" cy="1022.1" r="9.1"/><circle cx="85.8" cy="1030.6" r="9.1"/><circle cx="66.5" cy="993.3" r="9.1"/><circle cx="94.6" cy="1022.0" r="9.1"/><circle cx="74.9" cy="1005.7" r="9.1"/><circle cx="81.2" cy="1002.7" r="9.1"/><circle cx="52.5" cy="998.3" r="9.1"/><circle cx="134.2" cy="1003.0" r="9.1"/><circle cx="58.3" cy="1004.0" r="9.1"/><circle cx="51.0" cy="1021.4" r="9.1"/><circle cx="53.7" cy="1028.5" r="9.1"/><circle cx="81.7" cy="1001.9" r="9.1"/><circle cx="69.1" cy="991.3" r="9.1"/><circle cx="63.0" cy="986.9" r="9.1"/><circle cx="59.3" cy="997.0" r="9.1"/><circle cx="135.1" cy="1022.3" r="9.1"/><circle cx="88.1" cy="989.1" r="9.1"/><circle cx="59.0" cy="975.1" r="9.1"/><circle cx="56.9" cy="1002.5" r="9.1"/><circle cx="50.7" cy="987.9" r="9.1"/><circle cx="95.8" cy="1007.4" r="9.1"/><circle cx="76.0" cy="1018.7" r="9.1"/><circle cx="62.0" cy="1007.8" r="9.1"/><circle cx="101.0" cy="971.5" r="9.1"/><circle cx="52.2" cy="1019.0" r="9.1"/><circle cx="55.1" cy="996.0" r="9.1"/><circle cx="68.3" cy="1025.9" r="9.1"/><circle cx="112.3" cy="986.0" r="9.1"/><circle cx="121.6" cy="1022.5" r="9.1"/><circle cx="90.0" cy="986.8" r="9.1"/><circle cx="55.8" cy="1029.8" r="9.1"/><circle cx="112.0" cy="1000.2" r="9.1"/><circle cx="81.3" cy="1029.9" r="9.1"/><circle cx="117.0" cy="1031.0" r="9.1"/><circle cx="103.8" cy="990.3" r="9.1"/><circle cx="52.2" cy="1028.8" r="9.1"/><circle cx="118.7" cy="1017.9" r="9.1"/><circle cx="72.2" cy="980.6" r="9.1"/><circle cx="60.6" cy="973.2" r="9.1"/><circle cx="71.4" cy="975.7" r="9.1"/><circle cx="112.7" cy="977.1" r="9.1"/><circle cx="104.3" cy="991.6" r="9.1"/><circle cx="72.8" cy="1029.8" r="9.1"/><circle cx="96.5" cy="1004.4" r="9.1"/><circle cx="100.8" cy="980.7" r="9.1"/><circle cx="78.6" cy="1029.8" r="9.1"/><circle cx="110.1" cy="997.9" r="9.1"/><circle cx="97.4" cy="1020.7" r="9.1"/><circle cx="134.1" cy="997.4" r="9.1"/><circle cx="114.0" cy="971.5" r="9.1"/><circle cx="88.9" cy="999.9" r="9.1"/><circle cx="62.5" cy="997.8" r="9.1"/><circle cx="61.6" cy="1005.7" r="9.1"/><circle cx="61.4" cy="1023.7" r="9.1"/><circle cx="117.7" cy="1008.9" r="9.1"/><circle cx="100.7" cy="1014.6" r="9.1"/><circle cx="93.9" cy="1028.7" r="9.1"/><circle cx="68.4" cy="1006.8" r="9.1"/><circle cx="119.2" cy="1000.3" r="9.1"/><circle cx="57.6" cy="1011.5" r="9.1"/><circle cx="75.6" cy="980.2" r="9.1"/><circle cx="79.9" cy="985.4" r="9.1"/><circle cx="118.0" cy="1019.4" r="9.1"/><circle cx="60.1" cy="1028.5" r="9.1"/><circle cx="59.4" cy="994.0" r="9.1"/><circle cx="77.3" cy="1020.6" r="9.1"/><circle cx="104.8" cy="991.6" r="9.1"/><circle cx="50.5" cy="985.2" r="9.1"/><circle cx="82.9" cy="999.1" r="9.1"/><circle cx="54.9" cy="1016.4" r="9.1"/><circle cx="50.7" cy="984.4" r="9.1"/><circle cx="101.8" cy="997.7" r="9.1"/><circle cx="131.8" cy="1020.7" r="9.1"/><circle cx="53.6" cy="1019.4" r="9.1"/><circle cx="76.6" cy="978.6" r="9.1"/><circle cx="61.3" cy="994.4" r="9.1"/><circle cx="51.0" cy="1008.0" r="9.1"/><circle cx="50.9" cy="1000.7" r="9.1"/><circle cx="73.5" cy="1013.5" r="9.1"/><circle cx="73.9" cy="1013.9" r="9.1"/><circle cx="93.5" cy="1002.9" r="9.1"/><circle cx="69.0" cy="993.7" r="9.1"/><circle cx="97.9" cy="1026.5" r="9.1"/><circle cx="119.3" cy="1012.1" r="9.1"/><circle cx="88.7" cy="1014.4" r="9.1"/><circle cx="85.1" cy="1002.7" r="9.1"/><circle cx="86.9" cy="974.7" r="9.1"/><circle cx="130.6" cy="993.2" r="9.1"/><circle cx="80.1" cy="1016.1" r="9.1"/><circle cx="102.4" cy="1005.0" r="9.1"/><circle cx="132.4" cy="1000.8" r="9.1"/><circle cx="50.8" cy="1013.8" r="9.1"/><circle cx="62.2" cy="985.4" r="9.1"/><circle cx="127.3" cy="987.1" r="9.1"/><circle cx="55.2" cy="985.4" r="9.1"/><circle cx="55.2" cy="976.2" r="9.1"/><circle cx="50.5" cy="1023.5" r="9.1"/><circle cx="117.5" cy="1010.3" r="9.1"/><circle cx="62.7" cy="998.2" r="9.1"/><circle cx="129.7" cy="1009.9" r="9.1"/><circle cx="67.1" cy="994.9" r="9.1"/><circle cx="83.8" cy="1001.1" r="9.1"/><circle cx="98.9" cy="981.0" r="9.1"/><circle cx="126.4" cy="1005.4" r="9.1"/><circle cx="125.3" cy="995.0" r="9.1"/><circle cx="50.6" cy="1028.4" r="9.1"/><circle cx="54.6" cy="1008.5" r="9.1"/><circle cx="73.8" cy="1009.9" r="9.1"/><circle cx="52.8" cy="979.6" r="9.1"/><circle cx="99.7" cy="974.2" r="9.1"/><circle cx="62.0" cy="971.5" r="9.1"/><circle cx="59.1" cy="1025.8" r="9.1"/><circle cx="52.2" cy="1013.5" r="9.1"/><circle cx="130.4" cy="1011.9" r="9.1"/><circle cx="72.9" cy="975.0" r="9.1"/><circle cx="133.3" cy="981.9" r="9.1"/><circle cx="92.9" cy="994.4" r="9.1"/><circle cx="98.3" cy="998.9" r="9.1"/><circle cx="136.4" cy="995.6" r="9.1"/><circle cx="72.7" cy="1007.9" r="9.1"/><circle cx="79.9" cy="1013.6" r="9.1"/><circle cx="65.2" cy="979.8" r="9.1"/><circle cx="60.8" cy="998.0" r="9.1"/><circle cx="117.3" cy="981.2" r="9.1"/><circle cx="103.7" cy="994.2" r="9.1"/><circle cx="124.3" cy="988.7" r="9.1"/><circle cx="121.0" cy="981.1" r="9.1"/><circle cx="67.1" cy="996.2" r="9.1"/><circle cx="134.2" cy="1022.3" r="9.1"/><circle cx="99.7" cy="990.1" r="9.1"/><circle cx="107.3" cy="985.1" r="9.1"/><circle cx="86.8" cy="972.0" r="9.1"/><circle cx="89.1" cy="1004.7" r="9.1"/><circle cx="137.6" cy="1016.9" r="9.1"/></g><g fill="#c85000" stroke="none" stroke-width="0.5"><circle cx="72.5" cy="1011.2" r="9.1"/></g><g fill="#d3d3d3" stroke="#8c8c8c" stroke-width="0.5"><circle cx="50.9" cy="990.7" r="9.1"/><circle cx="52.7" cy="994.6" r="9.1"/><circle cx="101.4" cy="1015.4" r="9.1"/><circle cx="126.5" cy="986.3" r="9.1"/><circle cx="58.7" cy="1011.7" r="9.1"/><circle cx="65.9" cy="991.8" r="9.1"/><circle cx="75.0" cy="971.5" r="9.1"/><circle cx="67.5" cy="1024.8" r="9.1"/><circle cx="60.9" cy="975.4" r="9.1"/><circle cx="60.8" cy="1009.1" r="9.1"/><circle cx="64.9" cy="977.2" r="9.1"/><circle cx="96.9" cy="1025.2" r="9.1"/><circle cx="59.0" cy="1006.0" r="9.1"/><circle cx="62.0" cy="971.5" r="9.1"/></g><g fill="#a5a3aa" stroke="#807e85" stroke-width="0.5"><circle cx="150.0" cy="978.0" r="9.1"/><circle cx="165.0" cy="971.2" r="9.1"/><circle cx="171.2" cy="971.0" r="9.1"/><circle cx="176.2" cy="978.8" r="9.1"/><circle cx="201.2" cy="985.0" r="9.1"/><circle cx="223.0" cy="985.0" r="9.1"/><circle cx="187.5" cy="991.0" r="9.1"/><circle cx="170.0" cy="991.0" r="9.1"/><circle cx="188.0" cy="1003.8" r="9.1"/><circle cx="208.8" cy="1003.8" r="9.1"/><circle cx="191.2" cy="1017.5" r="9.1"/><circle cx="160.0" cy="1023.8" r="9.1"/><circle cx="192.0" cy="1030.0" r="9.1"/><circle cx="145.0" cy="1000.0" r="9.1"/><circle cx="182.0" cy="997.0" r="9.1"/><circle cx="176.0" cy="1010.0" r="9.1"/><circle cx="186.0" cy="1017.0" r="9.1"/></g><g fill="#60a3d0" stroke="#4a86b0" stroke-width="0.5"><circle cx="201.2" cy="1008.0" r="9.1"/></g><g fill="#a5a3aa" stroke="#807e85" stroke-width="0.5"><circle cx="188.0" cy="1003.8" r="9.1"/><circle cx="208.8" cy="1003.8" r="9.1"/></g><g fill="#d3d3d3" stroke="#8c8c8c" stroke-width="0.5"><circle cx="165.8" cy="978.0" r="9.1"/><circle cx="156.2" cy="991.0" r="9.1"/><circle cx="168.0" cy="1010.0" r="9.1"/><circle cx="160.0" cy="1010.0" r="9.1"/><circle cx="174.2" cy="1023.8" r="9.1"/><circle cx="143.8" cy="1010.0" r="9.1"/><circle cx="133.0" cy="1009.0" r="9.1"/><circle cx="127.0" cy="985.0" r="9.1"/><circle cx="113.0" cy="1006.0" r="9.1"/><circle cx="92.5" cy="971.0" r="9.1"/><circle cx="62.0" cy="971.5" r="9.1"/><circle cx="52.0" cy="1003.0" r="9.1"/><circle cx="85.0" cy="1023.0" r="9.1"/></g><g fill="#60a3d0" stroke="#4a86b0" stroke-width="0.5"><circle cx="272.0" cy="972.0" r="9.1"/><circle cx="220.0" cy="1023.2" r="9.1"/><circle cx="244.2" cy="1010.5" r="9.1"/><circle cx="253.8" cy="1017.0" r="9.1"/><circle cx="253.2" cy="1030.0" r="9.1"/></g><g fill="#326496" stroke="none" stroke-width="0.5"><circle cx="438.0" cy="978.8" r="9.1"/></g></svg>
</aside>
<main>
<div class="b" style="left:489px;top:248px;width:1419px;height:820px;border:1px solid #e6e6e6;background:#fff;"></div>
<span class="t" style="top:264px;font:700 15px/15px 'Liberation Sans',sans-serif;color:#595959;left:516.75px;">RFM сегменты</span>
<span class="t" style="top:264px;font:700 15px/15px 'Liberation Sans',sans-serif;color:#595959;letter-spacing:0.4px;left:766.25px;">Клиенты</span>
<div class="b" style="left:495.5px;top:293.9px;width:249.3px;height:2.1px;background:#009845;"></div>
<div class="b" style="left:744.8px;top:296px;width:1162.2px;height:1px;background:#e6e6e6;"></div>
<div class="b" style="left:490px;top:296px;width:5.5px;height:1px;background:#e6e6e6;"></div>
<span class="t" style="top:303px;font:400 22px/22px 'Liberation Sans',sans-serif;color:#1a1a1a;letter-spacing:-0.33px;left:516.60px;">RFM сегмент</span>
<svg class="b" style="left:654.7px;top:312.3px;" width="11" height="8" viewBox="0 0 11 8"><path d="M0.3 7.2 L5.4 0.8 L10.5 7.2Z" fill="#262626"/></svg>
<svg class="b" style="left:676.6px;top:305.2px;" width="21" height="19" viewBox="0 0 21 19"><circle cx="8" cy="8" r="6.6" fill="none" stroke="#1a1a1a" stroke-width="1.9"/><path d="M12.8 12.6 L19 18" stroke="#1a1a1a" stroke-width="2.4" stroke-linecap="round"/></svg>
<span class="t" style="top:309px;font:400 17px/17px 'Liberation Sans',sans-serif;color:#262626;letter-spacing:0.2px;left:842.75px;transform:translateX(-50%);">Активность клиентов</span>
<span class="t" style="top:309px;font:400 17px/17px 'Liberation Sans',sans-serif;color:#262626;left:1776.75px;transform:translateX(-50%);">Полезный совет</span>
<div class="b" style="left:490px;top:330px;width:1410px;height:735px;overflow:hidden;">
<div class="b" style="left:469.5px;top:54.5px;width:700px;height:1px;background:#a3a3a3;"></div>
<div class="b" style="left:469.5px;top:172.0px;width:700px;height:1px;background:#a3a3a3;"></div>
<div class="b" style="left:469.5px;top:310.75px;width:700px;height:1px;background:#a3a3a3;"></div>
<div class="b" style="left:469.5px;top:450.75px;width:700px;height:1px;background:#a3a3a3;"></div>
<div class="b" style="left:469.5px;top:568.0px;width:700px;height:1px;background:#a3a3a3;"></div>
<div class="b" style="left:3px;top:4.5px;width:232.5px;height:116.75px;background:#d3d3d3;"></div>
<div class="b" style="left:3px;top:121.25px;width:232.5px;height:139.25px;background:#a5a3aa;"></div>
<div class="b" style="left:3px;top:260.5px;width:232.5px;height:140.0px;background:#60a3d0;"></div>
<div class="b" style="left:3px;top:400.5px;width:232.5px;height:117.0px;background:#a03c23;"></div>
<div class="b" style="left:3px;top:517.5px;width:232.5px;height:184.75px;background:#c85000;"></div>
<div class="b" style="left:3px;top:702.25px;width:232.5px;height:67.75px;background:#326496;"></div>
<div class="b" style="left:235.0px;top:4px;width:1px;height:800px;background:#a3a3a3;"></div>
<div class="b" style="left:469.0px;top:4px;width:1px;height:800px;background:#a3a3a3;"></div>
<div class="b" style="left:1169.0px;top:4px;width:1px;height:800px;background:#a3a3a3;"></div>
<div class="b" style="left:1402.0px;top:4px;width:1px;height:800px;background:#a3a3a3;"></div>
<div class="b" style="left:3px;top:4.0px;width:1400px;height:1px;background:#a3a3a3;"></div>
<div class="b" style="left:3px;top:120.75px;width:1400px;height:1px;background:#a3a3a3;"></div>
<div class="b" style="left:3px;top:260.0px;width:1400px;height:1px;background:#a3a3a3;"></div>
<div class="b" style="left:3px;top:400.0px;width:1400px;height:1px;background:#a3a3a3;"></div>
<div class="b" style="left:3px;top:517.0px;width:1400px;height:1px;background:#a3a3a3;"></div>
<div class="b" style="left:3px;top:701.75px;width:1400px;height:1px;background:#a3a3a3;"></div>
<div class="b" style="left:703px;top:10px;width:419.5px;height:39.5px;background:#2b5d8a;"></div>
<div class="b" style="left:703px;top:62.5px;width:414.25px;height:51.75px;background:#2b5d8a;"></div>
<div class="b" style="left:703px;top:127px;width:52.5px;height:39.75px;background:#2b5d8a;"></div>
<div class="b" style="left:703px;top:181.75px;width:170.75px;height:69.0px;background:#2b5d8a;"></div>
<div class="b" style="left:703px;top:266.25px;width:8.25px;height:39.5px;background:#2b5d8a;"></div>
<div class="b" style="left:703px;top:320.75px;width:53.75px;height:69.75px;background:#2b5d8a;"></div>
<div class="b" style="left:703px;top:523.25px;width:3.25px;height:39.25px;background:#2b5d8a;"></div>
<div class="b" style="left:703px;top:582px;width:1.7000000000000455px;height:106.25px;background:#2b5d8a;"></div>
<div class="b" style="left:703.2px;top:458px;width:0.7px;height:52.75px;background:#9fb4c8;"></div>
</div>
<span class="t" style="top:385px;font:700 18px/18px 'Liberation Sans',sans-serif;color:#141414;letter-spacing:0.23px;left:495.60px;">Новые клиенты</span>
<span class="t" style="top:512px;font:700 18px/18px 'Liberation Sans',sans-serif;color:#141414;letter-spacing:0.49px;left:495.60px;">Перспективные</span>
<span class="t" style="top:638px;font:700 18px/18px 'Liberation Sans',sans-serif;color:#141414;letter-spacing:0.52px;left:495.60px;">Потенциальные</span>
<span class="t" style="top:664px;font:700 18px/18px 'Liberation Sans',sans-serif;color:#141414;letter-spacing:0.3px;left:495.80px;">лоялисты</span>
<span class="t" style="top:781px;font:700 18px/18px 'Liberation Sans',sans-serif;color:#141414;letter-spacing:0.45px;left:495.30px;">Потерянные клиенты</span>
<span class="t" style="top:932px;font:700 18px/18px 'Liberation Sans',sans-serif;color:#141414;letter-spacing:0.58px;left:495.60px;">Спящие клиенты</span>
<span class="t" style="top:385px;font:400 17px/17px 'Liberation Sans',sans-serif;color:#262626;letter-spacing:0.09px;left:842.54px;transform:translateX(-50%);">Купил совсем недавно.</span>
<span class="t" style="top:456px;font:400 17px/17px 'Liberation Sans',sans-serif;color:#262626;letter-spacing:0.05px;left:842.52px;transform:translateX(-50%);">Потенциальный лоялист</span>
<span class="t" style="top:479px;font:400 17px/17px 'Liberation Sans',sans-serif;color:#262626;letter-spacing:0.09px;left:842.54px;transform:translateX(-50%);">несколько месяцев назад.</span>
<span class="t" style="top:502px;font:400 17px/17px 'Liberation Sans',sans-serif;color:#262626;letter-spacing:0.13px;left:842.57px;transform:translateX(-50%);">Часто делает покупки и</span>
<span class="t" style="top:525px;font:400 17px/17px 'Liberation Sans',sans-serif;color:#262626;letter-spacing:0.2px;left:842.60px;transform:translateX(-50%);">много. Но последняя</span>
<span class="t" style="top:548px;font:400 17px/17px 'Liberation Sans',sans-serif;color:#262626;letter-spacing:0.29px;left:842.64px;transform:translateX(-50%);">покупка была несколько</span>
<span class="t" style="top:571px;font:400 17px/17px 'Liberation Sans',sans-serif;color:#262626;left:842.50px;transform:translateX(-50%);">недель назад.</span>
<span class="t" style="top:641px;font:400 17px/17px 'Liberation Sans',sans-serif;color:#262626;letter-spacing:0.1px;left:842.55px;transform:translateX(-50%);">Недавние клиенты, которые</span>
<span class="t" style="top:664px;font:400 17px/17px 'Liberation Sans',sans-serif;color:#262626;letter-spacing:0.09px;left:842.54px;transform:translateX(-50%);">потратили хорошие суммы.</span>
<span class="t" style="top:736px;font:400 17px/17px 'Liberation Sans',sans-serif;color:#262626;letter-spacing:-0.01px;left:842.50px;transform:translateX(-50%);">Сделали последнюю</span>
<span class="t" style="top:759px;font:400 17px/17px 'Liberation Sans',sans-serif;color:#262626;letter-spacing:0.24px;left:842.62px;transform:translateX(-50%);">покупку давным-давно и</span>
<span class="t" style="top:781px;font:400 17px/17px 'Liberation Sans',sans-serif;color:#262626;letter-spacing:0.14px;left:842.57px;transform:translateX(-50%);">вообще не</span>
<span class="t" style="top:804px;font:400 17px/17px 'Liberation Sans',sans-serif;color:#262626;letter-spacing:0.11px;left:842.55px;transform:translateX(-50%);">взаимодействовали</span>
<span class="t" style="top:827px;font:400 17px/17px 'Liberation Sans',sans-serif;color:#262626;letter-spacing:0.15px;left:842.58px;transform:translateX(-50%);">последние 4 недели.</span>
<span class="t" style="top:886px;font:400 17px/17px 'Liberation Sans',sans-serif;color:#262626;letter-spacing:0.04px;left:842.52px;transform:translateX(-50%);">Клиенты, которые делали</span>
<span class="t" style="top:909px;font:400 17px/17px 'Liberation Sans',sans-serif;color:#262626;letter-spacing:-0.01px;left:842.50px;transform:translateX(-50%);">небольшие и нечастые</span>
<span class="t" style="top:932px;font:400 17px/17px 'Liberation Sans',sans-serif;color:#262626;letter-spacing:0.35px;left:842.67px;transform:translateX(-50%);">покупки раньше, но уже</span>
<span class="t" style="top:955px;font:400 17px/17px 'Liberation Sans',sans-serif;color:#262626;letter-spacing:0.1px;left:842.55px;transform:translateX(-50%);">долгое время ничего не</span>
<span class="t" style="top:978px;font:400 17px/17px 'Liberation Sans',sans-serif;color:#262626;letter-spacing:0.52px;left:842.76px;transform:translateX(-50%);">покупали.</span>
<span class="t" style="top:340px;font:400 17px/17px 'Liberation Sans',sans-serif;color:#262626;letter-spacing:0.23px;left:1776.12px;transform:translateX(-50%);">Обеспечивайте поддержку</span>
<span class="t" style="top:363px;font:400 17px/17px 'Liberation Sans',sans-serif;color:#262626;letter-spacing:-0.16px;left:1775.92px;transform:translateX(-50%);">на начальном этапе работы с</span>
<span class="t" style="top:386px;font:400 17px/17px 'Liberation Sans',sans-serif;color:#262626;letter-spacing:0.09px;left:1776.05px;transform:translateX(-50%);">клиентами, предоставьте им</span>
<span class="t" style="top:409px;font:400 17px/17px 'Liberation Sans',sans-serif;color:#262626;letter-spacing:0.13px;left:1776.07px;transform:translateX(-50%);">ранний доступ, начните</span>
<span class="t" style="top:431px;font:400 17px/17px 'Liberation Sans',sans-serif;color:#262626;letter-spacing:0.2px;left:1776.10px;transform:translateX(-50%);">строить отношения.</span>
<span class="t" style="top:456px;font:400 17px/17px 'Liberation Sans',sans-serif;color:#262626;letter-spacing:0.37px;left:1776.18px;transform:translateX(-50%);">Предложите скидочные</span>
<span class="t" style="top:479px;font:400 17px/17px 'Liberation Sans',sans-serif;color:#262626;letter-spacing:0.09px;left:1776.05px;transform:translateX(-50%);">купоны. Верните их обратно</span>
<span class="t" style="top:502px;font:400 17px/17px 'Liberation Sans',sans-serif;color:#262626;letter-spacing:0.07px;left:1776.04px;transform:translateX(-50%);">и держите их вовлеченными.</span>
<span class="t" style="top:525px;font:400 17px/17px 'Liberation Sans',sans-serif;color:#262626;letter-spacing:0.07px;left:1776.04px;transform:translateX(-50%);">Предоставьте</span>
<span class="t" style="top:548px;font:400 17px/17px 'Liberation Sans',sans-serif;color:#262626;letter-spacing:0.23px;left:1776.12px;transform:translateX(-50%);">персонализированные</span>
<span class="t" style="top:571px;font:400 17px/17px 'Liberation Sans',sans-serif;color:#262626;letter-spacing:0.34px;left:1776.17px;transform:translateX(-50%);">рекомендации.</span>
<span class="t" style="top:595px;font:400 17px/17px 'Liberation Sans',sans-serif;color:#262626;letter-spacing:0.32px;left:1776.16px;transform:translateX(-50%);">Предложите программу</span>
<span class="t" style="top:618px;font:400 17px/17px 'Liberation Sans',sans-serif;color:#262626;letter-spacing:0.11px;left:1776.06px;transform:translateX(-50%);">членства / лояльности.</span>
<span class="t" style="top:641px;font:400 17px/17px 'Liberation Sans',sans-serif;color:#262626;letter-spacing:0.16px;left:1776.08px;transform:translateX(-50%);">Держите их вовлеченными.</span>
<span class="t" style="top:664px;font:400 17px/17px 'Liberation Sans',sans-serif;color:#262626;letter-spacing:0.42px;left:1776.21px;transform:translateX(-50%);">Предложите</span>
<span class="t" style="top:687px;font:400 17px/17px 'Liberation Sans',sans-serif;color:#262626;letter-spacing:0.23px;left:1776.12px;transform:translateX(-50%);">персонализированные</span>
<span class="t" style="top:710px;font:400 17px/17px 'Liberation Sans',sans-serif;color:#262626;letter-spacing:0.34px;left:1776.17px;transform:translateX(-50%);">рекомендации.</span>
<span class="t" style="top:736px;font:400 17px/17px 'Liberation Sans',sans-serif;color:#262626;letter-spacing:0.22px;left:1776.11px;transform:translateX(-50%);">Попробуйте возродить</span>
<span class="t" style="top:759px;font:400 17px/17px 'Liberation Sans',sans-serif;color:#262626;letter-spacing:0.12px;left:1776.06px;transform:translateX(-50%);">интерес с помощью</span>
<span class="t" style="top:781px;font:400 17px/17px 'Liberation Sans',sans-serif;color:#262626;letter-spacing:0.37px;left:1776.18px;transform:translateX(-50%);">маркетинговой кампании.</span>
<span class="t" style="top:804px;font:400 17px/17px 'Liberation Sans',sans-serif;color:#262626;letter-spacing:0.31px;left:1776.15px;transform:translateX(-50%);">Игнорируйте в противном</span>
<span class="t" style="top:827px;font:400 17px/17px 'Liberation Sans',sans-serif;color:#262626;letter-spacing:-0.23px;left:1775.88px;transform:translateX(-50%);">случае.</span>
<span class="t" style="top:852px;font:400 17px/17px 'Liberation Sans',sans-serif;color:#262626;letter-spacing:-0.01px;left:1775.99px;transform:translateX(-50%);">Включите их в свою</span>
<span class="t" style="top:875px;font:400 17px/17px 'Liberation Sans',sans-serif;color:#262626;letter-spacing:0.1px;left:1776.05px;transform:translateX(-50%);">стандартную рассылку по</span>
<span class="t" style="top:898px;font:400 17px/17px 'Liberation Sans',sans-serif;color:#262626;letter-spacing:0.23px;left:1776.12px;transform:translateX(-50%);">электронной почте, но</span>
<span class="t" style="top:921px;font:400 17px/17px 'Liberation Sans',sans-serif;color:#262626;letter-spacing:0.13px;left:1776.07px;transform:translateX(-50%);">регулярно проверяйте, не</span>
<span class="t" style="top:944px;font:400 17px/17px 'Liberation Sans',sans-serif;color:#262626;letter-spacing:0.11px;left:1776.06px;transform:translateX(-50%);">помечают ли они ваши</span>
<span class="t" style="top:967px;font:400 17px/17px 'Liberation Sans',sans-serif;color:#262626;letter-spacing:0.05px;left:1776.03px;transform:translateX(-50%);">письма как спам. Не</span>
<span class="t" style="top:990px;font:400 17px/17px 'Liberation Sans',sans-serif;color:#262626;letter-spacing:0.06px;left:1776.03px;transform:translateX(-50%);">тратьтесь слишком много на</span>
<span class="t" style="top:1013px;font:400 17px/17px 'Liberation Sans',sans-serif;color:#262626;letter-spacing:0.19px;left:1776.10px;transform:translateX(-50%);">этот сегмент.</span>
<span class="t" style="top:1038px;font:400 17px/17px 'Liberation Sans',sans-serif;color:#262626;letter-spacing:0.17px;left:1776.00px;transform:translateX(-50%);">Вознаграждайте их. Они</span>
<span class="t" style="top:340px;font:400 17px/17px 'Liberation Sans',sans-serif;color:#262626;letter-spacing:0.18px;right:730.50px;">Количество клиентов</span>
<span class="t" style="top:367px;font:400 16px/16px 'Liberation Mono',monospace;color:#262626;letter-spacing:-0.58px;right:737.50px;transform:scaleY(1.17);transform-origin:0 12px;">85,33%</span>
<span class="t" style="top:394px;font:400 17px/17px 'Liberation Sans',sans-serif;color:#262626;letter-spacing:0.6px;right:730.50px;">Продажи</span>
<span class="t" style="top:429px;font:400 16px/16px 'Liberation Mono',monospace;color:#262626;letter-spacing:-0.58px;right:737.50px;transform:scaleY(1.17);transform-origin:0 12px;">62,76%</span>
<span class="t" style="top:457px;font:400 17px/17px 'Liberation Sans',sans-serif;color:#262626;letter-spacing:0.18px;right:730.50px;">Количество клиентов</span>
<span class="t" style="top:484px;font:400 16px/16px 'Liberation Mono',monospace;color:#262626;letter-spacing:-0.58px;right:737.50px;transform:scaleY(1.17);transform-origin:0 12px;">11,00%</span>
<span class="t" style="top:517px;font:400 17px/17px 'Liberation Sans',sans-serif;color:#262626;letter-spacing:0.6px;right:730.50px;">Продажи</span>
<span class="t" style="top:563px;font:400 16px/16px 'Liberation Mono',monospace;color:#262626;letter-spacing:-0.58px;right:737.50px;transform:scaleY(1.17);transform-origin:0 12px;">25,90%</span>
<span class="t" style="top:596px;font:400 17px/17px 'Liberation Sans',sans-serif;color:#262626;letter-spacing:0.18px;right:730.50px;">Количество клиентов</span>
<span class="t" style="top:622px;font:400 16px/16px 'Liberation Mono',monospace;color:#262626;letter-spacing:-0.58px;right:737.50px;transform:scaleY(1.17);transform-origin:0 12px;">2,00%</span>
<span class="t" style="top:656px;font:400 17px/17px 'Liberation Sans',sans-serif;color:#262626;letter-spacing:0.6px;right:730.50px;">Продажи</span>
<span class="t" style="top:702px;font:400 16px/16px 'Liberation Mono',monospace;color:#262626;letter-spacing:-0.58px;right:737.50px;transform:scaleY(1.17);transform-origin:0 12px;">8,18%</span>
<span class="t" style="top:736px;font:400 17px/17px 'Liberation Sans',sans-serif;color:#262626;letter-spacing:0.18px;right:730.50px;">Количество клиентов</span>
<span class="t" style="top:762px;font:400 16px/16px 'Liberation Mono',monospace;color:#262626;letter-spacing:-0.58px;right:737.50px;transform:scaleY(1.17);transform-origin:0 12px;">0,33%</span>
<span class="t" style="top:789px;font:400 17px/17px 'Liberation Sans',sans-serif;color:#262626;letter-spacing:0.6px;right:730.50px;">Продажи</span>
<span class="t" style="top:824px;font:400 16px/16px 'Liberation Mono',monospace;color:#262626;letter-spacing:-0.58px;right:737.50px;transform:scaleY(1.17);transform-origin:0 12px;">0,08%</span>
<span class="t" style="top:853px;font:400 17px/17px 'Liberation Sans',sans-serif;color:#262626;letter-spacing:0.18px;right:730.50px;">Количество клиентов</span>
<span class="t" style="top:880px;font:400 16px/16px 'Liberation Mono',monospace;color:#262626;letter-spacing:-0.58px;right:737.50px;transform:scaleY(1.17);transform-origin:0 12px;">1,00%</span>
<span class="t" style="top:924px;font:400 17px/17px 'Liberation Sans',sans-serif;color:#262626;letter-spacing:0.6px;right:730.50px;">Продажи</span>
<span class="t" style="top:993px;font:400 16px/16px 'Liberation Mono',monospace;color:#262626;letter-spacing:-0.58px;right:737.50px;transform:scaleY(1.17);transform-origin:0 12px;">0,32%</span>
<span class="t" style="top:1037px;font:400 17px/17px 'Liberation Sans',sans-serif;color:#262626;letter-spacing:0.18px;right:730.50px;">Количество клиентов</span>
<div class="b" style="left:1100px;top:1040px;width:90px;height:25px;overflow:hidden;">
<span class="t" style="right:7.5px;top:23px;font:400 16px/16px 'Liberation Mono',monospace;color:#262626;letter-spacing:-0.58px;transform:scaleY(1.17);transform-origin:0 12px;">0,33%</span>
</div>
<div class="b" style="left:1660px;top:1055px;width:232px;height:10px;overflow:hidden;">
<span class="t" style="left:72.5px;top:6px;font:400 17px/17px 'Liberation Sans',sans-serif;color:#262626;">могут быть первыми</span>
</div>
<span class="t" style="top:355px;font:400 12px/12px 'Liberation Sans',sans-serif;color:#333;letter-spacing:-0.1px;left:1618.00px;">256</span>
<span class="t" style="top:413px;font:400 12px/12px 'Liberation Sans',sans-serif;color:#fff;letter-spacing:-0.1px;left:1198.75px;">1 949 874 535</span>
<span class="t" style="top:472px;font:400 12px/12px 'Liberation Sans',sans-serif;color:#333;letter-spacing:-0.1px;left:1250.75px;">33</span>
<span class="t" style="top:541px;font:400 12px/12px 'Liberation Sans',sans-serif;color:#333;letter-spacing:-0.1px;left:1369.25px;">804 665 070</span>
<span class="t" style="top:611px;font:400 12px/12px 'Liberation Sans',sans-serif;color:#333;letter-spacing:-0.1px;left:1206.75px;">6</span>
<span class="t" style="top:681px;font:400 12px/12px 'Liberation Sans',sans-serif;color:#333;letter-spacing:-0.1px;left:1251.75px;">254 220 522</span>
<span class="t" style="top:751px;font:400 12px/12px 'Liberation Sans',sans-serif;color:#333;letter-spacing:-0.1px;left:1199.25px;">1</span>
<span class="t" style="top:809px;font:400 12px/12px 'Liberation Sans',sans-serif;color:#333;letter-spacing:-0.1px;left:1198.75px;">2 510 934</span>
<span class="t" style="top:868px;font:400 12px/12px 'Liberation Sans',sans-serif;color:#333;letter-spacing:-0.1px;left:1201.75px;">3</span>
<span class="t" style="top:960px;font:400 12px/12px 'Liberation Sans',sans-serif;color:#333;letter-spacing:-0.1px;left:1200.00px;">9 954 185</span>
<span class="t" style="top:1052px;font:400 12px/12px 'Liberation Sans',sans-serif;color:#333;letter-spacing:-0.1px;left:1199.25px;">1</span>
</main>
</body></html>
